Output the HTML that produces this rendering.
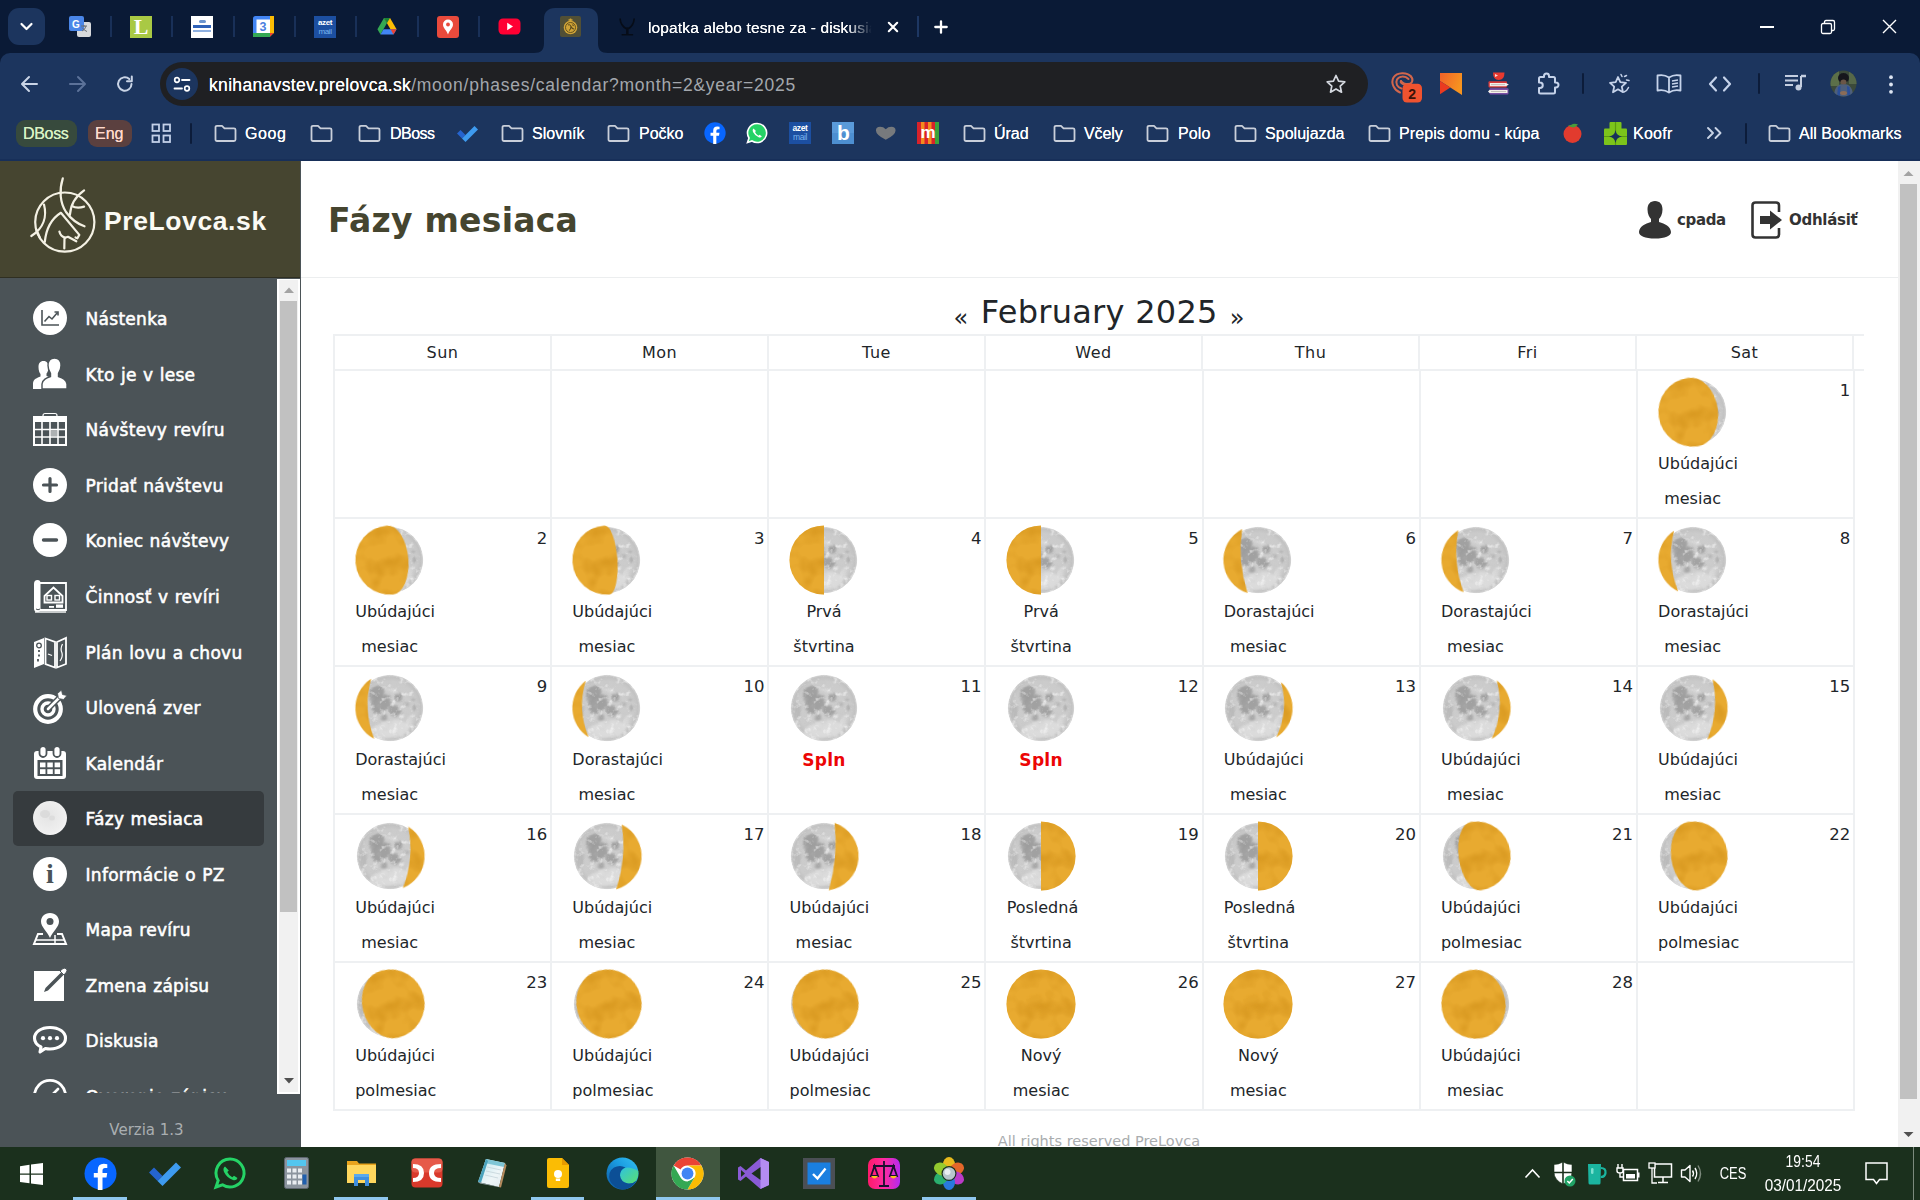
<!DOCTYPE html>
<html lang="sk">
<head>
<meta charset="utf-8">
<title>Fázy mesiaca</title>
<style>
*{box-sizing:border-box}
html,body{margin:0;padding:0}
body{width:1920px;height:1200px;overflow:hidden;position:relative;background:#fff;font-family:"DejaVu Sans","Liberation Sans",sans-serif;color:#212529}
.abs{position:absolute}
svg{display:block;overflow:visible}
/* ---------- browser chrome ---------- */
#tabstrip{position:absolute;left:0;top:0;width:1920px;height:70px;background:#0a1a36}
#toolbar{position:absolute;left:0;top:53px;width:1920px;height:108px;background:#1c355e;border-radius:10px 10px 0 0}
.ui{font-family:"Liberation Sans",sans-serif;color:#fff}
#urlpill{position:absolute;left:160px;top:62px;width:1208px;height:44px;border-radius:22px;background:#1f2023}
.bm{position:absolute;top:110px;height:46px;line-height:46px;font-family:"Liberation Sans",sans-serif;font-size:16px;color:#fff;white-space:nowrap}
.bmt{position:absolute;top:123px;height:22px;line-height:22px;font-family:"Liberation Sans",sans-serif;font-size:16px;color:#fff;white-space:nowrap;text-shadow:0 0 .4px #fff}
/* ---------- page ---------- */
#side{position:absolute;left:0;top:161px;width:301.500px;height:986px;background:#4b5357;border-right:1.500px solid #2f3538}
#sidehead{position:absolute;left:0;top:0;width:300px;height:117px;background:#464530;border-bottom:1px solid #2f2f22}
#main{position:absolute;left:301px;top:161px;width:1597px;height:986px;background:#fff}
.mi{position:absolute;left:13px;width:251px;height:55px;border-radius:5px}
.mi .ic{position:absolute;left:20px;top:10px;width:34px;height:34px}
.mi .tx{position:absolute;left:72.500px;top:1px;height:55px;line-height:55px;font-size:17px;color:#fff;white-space:nowrap;letter-spacing:.300px;word-spacing:.600px;-webkit-text-stroke:.550px #fff}
.mi.act{background:#363b3e}
/* calendar */
.th{position:absolute;top:336px;height:34px;line-height:33px;text-align:center;font-size:16px;letter-spacing:.500px;color:#212529}
.cell{position:absolute;width:217px;height:148px}
.cell .num{position:absolute;right:3.7px;top:12.5px;font-size:16.5px;line-height:16px;color:#212529}
.cell .moon{position:absolute;left:19.800px;top:5.700px;width:72px;height:72px}
.cell .lbl{position:absolute;left:21.200px;top:76px;width:69px;text-align:center;font-size:16px;line-height:35px;color:#212529;white-space:nowrap}
.cell .lbl span{display:block}
.cell .lbl span.w{text-align:left}
.cell .lbl b{color:#ec0505;font-weight:bold;font-size:17px;letter-spacing:.300px;position:relative;top:.500px}
/* taskbar */
#taskbar{position:absolute;left:0;top:1147px;width:1920px;height:53px;background:#1b301d}
.und{position:absolute;top:50px;height:3px;background:#8fc7ee}
.tray{position:absolute;font-family:"Liberation Sans",sans-serif;color:#fff;white-space:nowrap}
</style>
</head>
<body>
<!-- ================= BROWSER CHROME ================= -->
<div id="tabstrip"></div>
<div id="toolbar"></div>
<div class="abs" style="left:0;top:158.500px;width:1920px;height:2.500px;background:#172f59"></div>
<!-- tab search button -->
<div class="abs" style="left:8px;top:8px;width:37px;height:37px;border-radius:11px;background:#1c355e"></div>
<svg class="abs" style="left:18px;top:19px" width="17" height="15" viewBox="0 0 17 15"><path d="M3.5 5 L8.5 10 L13.5 5" fill="none" stroke="#fff" stroke-width="2.2" stroke-linecap="round" stroke-linejoin="round"/></svg>
<!-- pinned tab separators -->
<div class="abs" style="left:110px;top:16px;width:2px;height:21px;background:#193058"></div>
<div class="abs" style="left:171px;top:16px;width:2px;height:21px;background:#193058"></div>
<div class="abs" style="left:233px;top:16px;width:2px;height:21px;background:#193058"></div>
<div class="abs" style="left:294px;top:16px;width:2px;height:21px;background:#193058"></div>
<div class="abs" style="left:355px;top:16px;width:2px;height:21px;background:#193058"></div>
<div class="abs" style="left:417px;top:16px;width:2px;height:21px;background:#193058"></div>
<div class="abs" style="left:478px;top:16px;width:2px;height:21px;background:#193058"></div>
<!-- pinned favicons -->
<!-- google translate -->
<svg class="abs" style="left:68px;top:15px" width="24" height="23" viewBox="0 0 24 23"><rect x="9" y="7" width="14" height="15" rx="2" fill="#d7d9dc"/><rect x="1" y="1" width="15" height="15" rx="2" fill="#4a86e8"/><text x="4" y="12.5" font-family="Liberation Sans,sans-serif" font-size="10" font-weight="bold" fill="#fff">G</text><path d="M13 11 l6 0 M16 10 l0 2 M14 16 q3 -1 4 -5 M14 12.5 q2 3 5 4" stroke="#6b6f75" stroke-width="1" fill="none"/></svg>
<!-- L -->
<div class="abs" style="left:130px;top:16px;width:22px;height:22px;background:#a9c944;color:#fff;font-family:'Liberation Serif',serif;font-size:22px;line-height:22px;text-align:center;font-weight:bold">L</div>
<!-- white square w/ blue -->
<div class="abs" style="left:191px;top:16px;width:22px;height:22px;background:#fff"></div>
<div class="abs" style="left:193px;top:25px;width:18px;height:3px;background:#2f62b8"></div>
<div class="abs" style="left:193px;top:30px;width:18px;height:2px;background:#8fb0e0"></div>
<div class="abs" style="left:199px;top:20px;width:7px;height:3px;background:#6c95cf;border-radius:2px"></div>
<!-- google calendar -->
<svg class="abs" style="left:252px;top:15px" width="23" height="23" viewBox="0 0 23 23"><rect x="1" y="1" width="21" height="21" rx="2.500" fill="#4285f4"/><rect x="1" y="18" width="21" height="4" fill="#34a853"/><rect x="18" y="1" width="4" height="18" fill="#fbbc04"/><path d="M18 18 L22 18 L18 22 Z" fill="#ea4335"/><path d="M18 22 L22 18 L22 22 Z" fill="#0a1a36"/><rect x="4.500" y="4.500" width="13.500" height="13.500" fill="#fff"/><text x="7.500" y="16" font-family="Liberation Sans,sans-serif" font-size="12.500" font-weight="bold" fill="#4a7fe0">3</text></svg>
<!-- azet mail -->
<div class="abs" style="left:314px;top:16px;width:22px;height:22px;background:#1c4fa1"></div>
<div class="abs ui" style="left:314px;top:18px;width:22px;font-size:8px;line-height:8.500px;text-align:center;font-weight:bold;letter-spacing:-.4px;padding-top:1px">azet<br><span style="font-weight:normal;color:#79b4ee">mail</span></div>
<!-- google drive -->
<svg class="abs" style="left:376.500px;top:17px" width="20" height="18.300" viewBox="0 0 23 21"><path d="M8 1 L15 1 L22.5 14 L15.5 14 Z" fill="#fbbc04"/><path d="M8 1 L0.5 14 L4 20 L11.5 7 Z" fill="#34a853"/><path d="M4 20 L19 20 L22.5 14 L7.5 14 Z" fill="#4285f4"/><path d="M15.5 14 L22.5 14 L19 20 Z" fill="#ea4335"/><path d="M8 1 L11.5 7 L15 1 Z" fill="#188038"/></svg>
<!-- google maps -->
<svg class="abs" style="left:437px;top:16px" width="22" height="22" viewBox="0 0 22 22"><rect width="22" height="22" rx="3" fill="#e94a3c"/><path d="M11 3.5 a5 5 0 0 1 5 5 c0 3.5 -3.5 5.5 -5 10 c-1.500 -4.5 -5 -6.500 -5 -10 a5 5 0 0 1 5 -5z" fill="#fff"/><circle cx="11" cy="8.500" r="1.900" fill="#e94a3c"/></svg>
<!-- youtube -->
<svg class="abs" style="left:498px;top:18px" width="23" height="17" viewBox="0 0 23 17"><rect x="0.500" y="0.500" width="22" height="16" rx="4.500" fill="#ff0033"/><path d="M9.200 4.800 L15 8.500 L9.200 12.200 Z" fill="#fff"/></svg>
<!-- active tab -->
<svg class="abs" style="left:534px;top:8px" width="76" height="45" viewBox="0 0 76 45"><path d="M0 45 C7 45 10 42 10 35 L10 11 C10 4 14 0 21 0 L53 0 C60 0 64 4 64 11 L64 35 C64 42 67 45 74 45 Z" fill="#1c355e"/></svg>
<!-- prelovca favicon -->
<div class="abs" style="left:560px;top:16px;width:21px;height:21px;background:#514f35;border-radius:2px"></div>
<svg class="abs" style="left:560px;top:16px" width="21" height="21" viewBox="0 0 21 21"><circle cx="10.500" cy="11.500" r="6.800" fill="#d0a437"/><circle cx="10.500" cy="11.500" r="5" fill="none" stroke="#5a4a1c" stroke-width=".900"/><path d="M10.500 2.500 L10.500 5.500 M8.500 4 L12.500 4" stroke="#d0a437" stroke-width="1.400"/><path d="M8 9 Q10 8 11 10.500 Q12 13 14 13 M9 14.500 Q11 13.500 11 10.500 M12.500 8.500 L13.500 10" stroke="#5a4a1c" stroke-width="1.100" fill="none"/></svg>
<!-- second tab -->
<svg class="abs" style="left:617.500px;top:17px" width="18.700" height="19.500" viewBox="0 0 22 23"><path d="M2.500 2.500 Q3 10 10 14 M19 2.500 Q18.500 10 12 14 M10.500 13 L10.500 20.500 M11.500 13 L11.500 20.500 M5 21 L17 21" stroke="#060c17" stroke-width="1.900" fill="none" stroke-linecap="round"/></svg>
<div class="abs ui" id="tabtitle" style="left:648px;top:16.600px;width:226px;height:22px;line-height:22px;font-size:15.500px;letter-spacing:.140px;white-space:nowrap;overflow:hidden;text-shadow:0 0 .4px #fff;-webkit-mask-image:linear-gradient(90deg,#000 88%,transparent 99%);mask-image:linear-gradient(90deg,#000 88%,transparent 99%)">lopatka alebo tesne za - diskusia</div>
<svg class="abs" style="left:886px;top:20px" width="14" height="14" viewBox="0 0 14 14"><path d="M2.800 2.800 L11.200 11.200 M11.200 2.800 L2.800 11.200" stroke="#fff" stroke-width="2.100" stroke-linecap="round"/></svg>
<div class="abs" style="left:917px;top:16px;width:2px;height:21px;background:#1d3763"></div>
<svg class="abs" style="left:933px;top:19px" width="16" height="16" viewBox="0 0 16 16"><path d="M8 2.300 L8 13.700 M2.300 8 L13.700 8" stroke="#fff" stroke-width="2.300" stroke-linecap="round"/></svg>
<!-- window controls -->
<div class="abs" style="left:1760px;top:26px;width:14px;height:1.500px;background:#fff"></div>
<svg class="abs" style="left:1820px;top:19px" width="16" height="16" viewBox="0 0 16 16"><rect x="1.500" y="4.500" width="10" height="10" rx="1.500" fill="none" stroke="#fff" stroke-width="1.300"/><path d="M4.500 4.500 L4.500 3 Q4.500 1.500 6 1.500 L13 1.500 Q14.500 1.500 14.500 3 L14.500 10 Q14.500 11.500 13 11.500 L11.500 11.500" fill="none" stroke="#fff" stroke-width="1.300"/></svg>
<svg class="abs" style="left:1882px;top:19px" width="15" height="15" viewBox="0 0 15 15"><path d="M1 1 L14 14 M14 1 L1 14" stroke="#fff" stroke-width="1.400"/></svg>
<!-- nav buttons -->
<svg class="abs" style="left:20px;top:75px" width="19" height="18" viewBox="0 0 19 18"><path d="M17 9 L2.500 9 M9 2 L2 9 L9 16" fill="none" stroke="#c9d4e6" stroke-width="2" stroke-linecap="round" stroke-linejoin="round"/></svg>
<svg class="abs" style="left:68px;top:75px" width="19" height="18" viewBox="0 0 19 18"><path d="M2 9 L16.500 9 M10 2 L17 9 L10 16" fill="none" stroke="#5c7299" stroke-width="2" stroke-linecap="round" stroke-linejoin="round"/></svg>
<svg class="abs" style="left:115px;top:74px" width="20" height="20" viewBox="0 0 20 20"><path d="M16.500 10 A6.700 6.700 0 1 1 14.300 5" fill="none" stroke="#c9d4e6" stroke-width="2" stroke-linecap="round"/><path d="M16.800 2.500 L16.800 7.300 L12 7.300" fill="none" stroke="#c9d4e6" stroke-width="2" stroke-linejoin="round" stroke-linecap="round"/></svg>
<!-- url pill -->
<div id="urlpill"></div>
<div class="abs" style="left:166px;top:68px;width:32px;height:32px;border-radius:16px;background:#1c355e"></div>
<svg class="abs" style="left:173px;top:76px" width="18" height="17" viewBox="0 0 18 17"><circle cx="4" cy="4" r="2.300" fill="none" stroke="#fff" stroke-width="1.700"/><path d="M9 4 L16.500 4" stroke="#fff" stroke-width="1.800" stroke-linecap="round"/><circle cx="14" cy="12.500" r="2.300" fill="none" stroke="#fff" stroke-width="1.700"/><path d="M1.500 12.500 L9 12.500" stroke="#fff" stroke-width="1.800" stroke-linecap="round"/></svg>
<div class="abs ui" id="url" style="left:209px;top:70.800px;height:28px;line-height:28px;font-size:17.500px;white-space:nowrap"><span id="urlhost" style="color:#fff;text-shadow:0 0 .4px #fff;letter-spacing:.330px">knihanavstev.prelovca.sk</span><span id="urlpath" style="color:#a3a7ad;letter-spacing:.760px">/moon/phases/calendar?month=2&amp;year=2025</span></div>
<svg class="abs" style="left:1325px;top:73px" width="22" height="22" viewBox="0 0 22 22"><path d="M11 2.500 L13.600 8.200 L19.800 8.900 L15.200 13.100 L16.500 19.200 L11 16.100 L5.500 19.200 L6.800 13.100 L2.200 8.900 L8.400 8.200 Z" fill="none" stroke="#d5d9e0" stroke-width="1.700" stroke-linejoin="round"/></svg>
<!-- extension icons -->
<svg class="abs" style="left:1391px;top:71px" width="32" height="32" viewBox="0 0 32 32"><g fill="none" stroke="#d2664c" stroke-width="2" stroke-linecap="round"><path d="M20 5.500 C16 1 6 1 2.500 6.500 C-.500 12 3 19 9 21.500"/><path d="M17.500 8 C14 4.500 8 5 6 8.500 C4 12.500 6.500 16.500 10.500 17.500"/><path d="M20 5.500 C23 9 21 13 17 13 C13.500 13 11 11.500 10 10"/><path d="M14.500 13.500 C10.500 13.500 9 11 10 10"/></g><rect x="11.500" y="12.700" width="19.500" height="18.800" rx="4.500" fill="#f0532f"/><text x="21.200" y="27.500" text-anchor="middle" font-family="Liberation Sans,sans-serif" font-size="14" font-weight="bold" fill="#3a1208">2</text></svg>
<svg class="abs" style="left:1440px;top:72.500px" width="22" height="22" viewBox="0 0 22 22"><defs><linearGradient id="og" x1="0" y1="0" x2="1" y2=".4"><stop offset="0" stop-color="#f2612a"/><stop offset="1" stop-color="#f7941f"/></linearGradient></defs><path d="M0 0 L22 0 L22 22 L10.300 14.400 L0 8.100 Z" fill="url(#og)"/><path d="M0 8.100 L10.300 14.400 L0 21.300 Z" fill="#ea3a20"/></svg>
<svg class="abs" style="left:1487px;top:72px" width="24" height="24" viewBox="0 0 24 24"><path d="M6 .500 L17.500 .500 Q17.500 8 11.700 8 Q6 8 6 .500 Z" fill="#e8392f"/><path d="M8 2 L11 3.500 L8 5 Z" fill="#ffd9d2"/><rect x="1.500" y="9.300" width="18.500" height="6.200" rx="1" fill="#d93a3a"/><path d="M2.800 11 L19 11 L21.800 12.600 L19 14.200 L2.800 14.200 Z" fill="#f3efe9"/><path d="M4 12.600 L18 12.600" stroke="#b9b4ad" stroke-width=".800"/><rect x="2.500" y="16.300" width="19" height="6.200" rx="1" fill="#7b4fa6"/><path d="M2.500 18 L20.500 18 L20.500 21 L2.500 21 L1 19.500 Z" fill="#f3efe9"/><path d="M4 19.500 L19 19.500" stroke="#b9b4ad" stroke-width=".800"/></svg>
<svg class="abs" style="left:1535px;top:72px" width="24" height="24" viewBox="0 0 24 24"><path d="M9 5 L9 4 A2.500 2.500 0 0 1 14 4 L14 5 L18.500 5 Q20 5 20 6.500 L20 10.500 L21 10.500 A2.500 2.500 0 0 1 21 15.500 L20 15.500 L20 20 Q20 21.500 18.500 21.500 L5.500 21.500 Q4 21.500 4 20 L4 16 L5 16 A2.700 2.700 0 0 0 5 10.500 L4 10.500 L4 6.500 Q4 5 5.500 5 Z" fill="none" stroke="#c6d3ea" stroke-width="2" stroke-linejoin="round"/></svg>
<div class="abs" style="left:1582px;top:73px;width:2px;height:21px;background:#0c1c3a;border-radius:1px"></div>
<svg class="abs" style="left:1607px;top:72px" width="24" height="24" viewBox="0 0 24 24"><path d="M11 5 L13.300 10.200 L19 10.800 L14.800 14.600 L16 20.200 L11 17.300 L6 20.200 L7.200 14.600 L3 10.800 L8.700 10.200 Z" fill="none" stroke="#c6d3ea" stroke-width="1.800" stroke-linejoin="round"/><path d="M14 2.500 L15 4.500 M17.500 4.500 L19.500 3.500 M19.500 8 L22 8.500 M17 20 Q20 19 21.500 15.500" fill="none" stroke="#c6d3ea" stroke-width="1.500" stroke-linecap="round"/></svg>
<svg class="abs" style="left:1656px;top:73px" width="26" height="22" viewBox="0 0 26 22"><path d="M13 4.500 Q8 1 1.500 2.500 L1.500 17.500 Q8 16 13 19.500 Q18 16 24.500 17.500 L24.500 2.500 Q18 1 13 4.500 Z M13 4.500 L13 19.500" fill="none" stroke="#c6d3ea" stroke-width="1.800" stroke-linejoin="round"/><path d="M16 8 L22 7 M16 11 L22 10 M16 14 L22 13" stroke="#c6d3ea" stroke-width="1.400"/></svg>
<svg class="abs" style="left:1708px;top:75px" width="24" height="18" viewBox="0 0 24 18"><path d="M8 2.500 L2 9 L8 15.500 M16 2.500 L22 9 L16 15.500" fill="none" stroke="#c6d3ea" stroke-width="2.200" stroke-linejoin="round" stroke-linecap="round"/></svg>
<div class="abs" style="left:1758px;top:73px;width:2px;height:21px;background:#0c1c3a;border-radius:1px"></div>
<svg class="abs" style="left:1784px;top:73px" width="24" height="20" viewBox="0 0 24 20"><path d="M1 3 L14 3 M1 7.500 L14 7.500 M1 12 L9 12" stroke="#c4cee0" stroke-width="2"/><path d="M17 3 L17 14" stroke="#c4cee0" stroke-width="2"/><path d="M17 3 L22 3" stroke="#c4cee0" stroke-width="2.500"/><circle cx="14.500" cy="14.500" r="3" fill="#c4cee0"/></svg>
<!-- avatar -->
<svg class="abs" style="left:1830px;top:70px" width="27" height="27" viewBox="0 0 27 27"><defs><clipPath id="avc"><circle cx="13.500" cy="13.500" r="13"/></clipPath><filter id="avb"><feGaussianBlur stdDeviation=".700"/></filter></defs><g clip-path="url(#avc)"><rect width="27" height="27" fill="#3c4a3a"/><g filter="url(#avb)"><rect x="0" y="0" width="9" height="16" fill="#5c7048"/><rect x="19" y="0" width="8" height="14" fill="#566848"/><ellipse cx="13.500" cy="8" rx="5.500" ry="5" fill="#15181f"/><path d="M4 27 Q4 14 13.500 14 Q23 14 23 27 Z" fill="#4d5f7c"/><path d="M7 27 L8 17 L10.500 16 L10 27 Z M17 16 L19.500 17 L20.500 27 L17.500 27 Z" fill="#2b4f9a"/><ellipse cx="13.500" cy="12" rx="3" ry="2.500" fill="#6a5647"/><ellipse cx="13.500" cy="23" rx="3.500" ry="2" fill="#8a6c58"/></g></g></svg>
<svg class="abs" style="left:1888px;top:73px" width="6" height="24" viewBox="0 0 6 24"><circle cx="3" cy="4.200" r="1.900" fill="#dde5f2"/><circle cx="3" cy="11.500" r="1.900" fill="#dde5f2"/><circle cx="3" cy="18.800" r="1.900" fill="#dde5f2"/></svg>
<!-- ================= BOOKMARKS BAR ================= -->
<div class="abs" style="left:16px;top:120px;width:61px;height:27px;border-radius:9px;background:#374a3d"></div>
<div class="abs" style="left:88px;top:120px;width:44px;height:27px;border-radius:9px;background:#5b403f"></div>
<svg class="abs" style="left:151px;top:123px" width="21" height="21" viewBox="0 0 21 21"><g fill="none" stroke="#c3d0e8" stroke-width="1.800"><rect x="1.500" y="1.500" width="6.500" height="6.500"/><rect x="12.500" y="1.500" width="6.500" height="6.500"/><rect x="1.500" y="12.500" width="6.500" height="6.500"/><rect x="12.500" y="12.500" width="6.500" height="6.500"/></g></svg>
<div class="abs" style="left:190px;top:123px;width:2px;height:21px;background:#0c1c3a;border-radius:1px"></div>
<div class="bmt" id="bm0" style="left:23px;letter-spacing:-0.325px;color:#d9f2c4;text-shadow:0 0 .4px #d9f2c4">DBoss</div>
<div class="bmt" id="bm1" style="left:95px;letter-spacing:0.010px;color:#ffd9cc;text-shadow:0 0 .4px #ffd9cc">Eng</div>
<svg class="abs" style="left:214px;top:123px" width="23" height="20" viewBox="0 0 23 20"><path d="M1.500 4.300 Q1.500 2.800 3 2.800 L8 2.800 L10.500 5.300 L20 5.300 Q21.500 5.300 21.500 6.800 L21.500 16.500 Q21.500 18 20 18 L3 18 Q1.500 18 1.500 16.500 Z" fill="none" stroke="#c9cfda" stroke-width="1.800" stroke-linejoin="round"/></svg>
<div class="bmt" id="bm2" style="left:245px;letter-spacing:0.590px;">Goog</div>
<svg class="abs" style="left:310px;top:123px" width="23" height="20" viewBox="0 0 23 20"><path d="M1.500 4.300 Q1.500 2.800 3 2.800 L8 2.800 L10.500 5.300 L20 5.300 Q21.500 5.300 21.500 6.800 L21.500 16.500 Q21.500 18 20 18 L3 18 Q1.500 18 1.500 16.500 Z" fill="none" stroke="#c9cfda" stroke-width="1.800" stroke-linejoin="round"/></svg>
<svg class="abs" style="left:358px;top:123px" width="23" height="20" viewBox="0 0 23 20"><path d="M1.500 4.300 Q1.500 2.800 3 2.800 L8 2.800 L10.500 5.300 L20 5.300 Q21.500 5.300 21.500 6.800 L21.500 16.500 Q21.500 18 20 18 L3 18 Q1.500 18 1.500 16.500 Z" fill="none" stroke="#c9cfda" stroke-width="1.800" stroke-linejoin="round"/></svg>
<div class="bmt" id="bm4" style="left:390px;letter-spacing:-0.525px;">DBoss</div>
<svg class="abs" style="left:501px;top:123px" width="23" height="20" viewBox="0 0 23 20"><path d="M1.500 4.300 Q1.500 2.800 3 2.800 L8 2.800 L10.500 5.300 L20 5.300 Q21.500 5.300 21.500 6.800 L21.500 16.500 Q21.500 18 20 18 L3 18 Q1.500 18 1.500 16.500 Z" fill="none" stroke="#c9cfda" stroke-width="1.800" stroke-linejoin="round"/></svg>
<div class="bmt" id="bm5" style="left:532px;letter-spacing:0.004px;">Slovník</div>
<svg class="abs" style="left:607px;top:123px" width="23" height="20" viewBox="0 0 23 20"><path d="M1.500 4.300 Q1.500 2.800 3 2.800 L8 2.800 L10.500 5.300 L20 5.300 Q21.500 5.300 21.500 6.800 L21.500 16.500 Q21.500 18 20 18 L3 18 Q1.500 18 1.500 16.500 Z" fill="none" stroke="#c9cfda" stroke-width="1.800" stroke-linejoin="round"/></svg>
<div class="bmt" id="bm6" style="left:639px;letter-spacing:0.006px;">Počko</div>
<svg class="abs" style="left:963px;top:123px" width="23" height="20" viewBox="0 0 23 20"><path d="M1.500 4.300 Q1.500 2.800 3 2.800 L8 2.800 L10.500 5.300 L20 5.300 Q21.500 5.300 21.500 6.800 L21.500 16.500 Q21.500 18 20 18 L3 18 Q1.500 18 1.500 16.500 Z" fill="none" stroke="#c9cfda" stroke-width="1.800" stroke-linejoin="round"/></svg>
<div class="bmt" id="bm7" style="left:994px;letter-spacing:-0.047px;">Úrad</div>
<svg class="abs" style="left:1053px;top:123px" width="23" height="20" viewBox="0 0 23 20"><path d="M1.500 4.300 Q1.500 2.800 3 2.800 L8 2.800 L10.500 5.300 L20 5.300 Q21.500 5.300 21.500 6.800 L21.500 16.500 Q21.500 18 20 18 L3 18 Q1.500 18 1.500 16.500 Z" fill="none" stroke="#c9cfda" stroke-width="1.800" stroke-linejoin="round"/></svg>
<div class="bmt" id="bm8" style="left:1084px;letter-spacing:-0.125px;">Včely</div>
<svg class="abs" style="left:1146px;top:123px" width="23" height="20" viewBox="0 0 23 20"><path d="M1.500 4.300 Q1.500 2.800 3 2.800 L8 2.800 L10.500 5.300 L20 5.300 Q21.500 5.300 21.500 6.800 L21.500 16.500 Q21.500 18 20 18 L3 18 Q1.500 18 1.500 16.500 Z" fill="none" stroke="#c9cfda" stroke-width="1.800" stroke-linejoin="round"/></svg>
<div class="bmt" id="bm9" style="left:1178px;letter-spacing:0.117px;">Polo</div>
<svg class="abs" style="left:1234px;top:123px" width="23" height="20" viewBox="0 0 23 20"><path d="M1.500 4.300 Q1.500 2.800 3 2.800 L8 2.800 L10.500 5.300 L20 5.300 Q21.500 5.300 21.500 6.800 L21.500 16.500 Q21.500 18 20 18 L3 18 Q1.500 18 1.500 16.500 Z" fill="none" stroke="#c9cfda" stroke-width="1.800" stroke-linejoin="round"/></svg>
<div class="bmt" id="bm10" style="left:1265px;letter-spacing:0.033px;">Spolujazda</div>
<svg class="abs" style="left:1368px;top:123px" width="23" height="20" viewBox="0 0 23 20"><path d="M1.500 4.300 Q1.500 2.800 3 2.800 L8 2.800 L10.500 5.300 L20 5.300 Q21.500 5.300 21.500 6.800 L21.500 16.500 Q21.500 18 20 18 L3 18 Q1.500 18 1.500 16.500 Z" fill="none" stroke="#c9cfda" stroke-width="1.800" stroke-linejoin="round"/></svg>
<div class="bmt" id="bm11" style="left:1399px;letter-spacing:0.098px;">Prepis domu - kúpa</div>
<div class="bmt" id="bm12" style="left:1633px;letter-spacing:0.250px;">Koofr</div>
<svg class="abs" style="left:1768px;top:123px" width="23" height="20" viewBox="0 0 23 20"><path d="M1.500 4.300 Q1.500 2.800 3 2.800 L8 2.800 L10.500 5.300 L20 5.300 Q21.500 5.300 21.500 6.800 L21.500 16.500 Q21.500 18 20 18 L3 18 Q1.500 18 1.500 16.500 Z" fill="none" stroke="#c9cfda" stroke-width="1.800" stroke-linejoin="round"/></svg>
<div class="bmt" id="bm13" style="left:1799px;letter-spacing:0.019px;">All Bookmarks</div>
<!-- bookmark favicons -->
<svg class="abs" style="left:455px;top:123px" width="26" height="20" viewBox="0 0 26 20"><path d="M2 10.500 L5.500 7 L10.500 12 L7 15.500 Z" fill="#2564cf"/><path d="M7 15.500 L19.500 3 L23 6.500 L10.500 19 Z" fill="#3e9bf0"/></svg>
<svg class="abs" style="left:704px;top:122px" width="22" height="22" viewBox="0 0 33 33"><circle cx="16.500" cy="16.500" r="16" fill="#0866ff"/><path d="M18.500 33 L18.500 20.500 L22.500 20.500 L23.200 16 L18.500 16 L18.500 13.500 Q18.500 11 21 11 L23.300 11 L23.300 7.200 Q21.500 6.800 19.800 6.800 Q13.800 6.800 13.800 13 L13.800 16 L9.800 16 L9.800 20.500 L13.800 20.500 L13.800 33 Z" fill="#fff"/></svg>
<svg class="abs" style="left:746px;top:122px" width="22" height="22" viewBox="0 0 22 22"><path d="M11 1.500 A9.500 9.500 0 1 1 6 19 L1.500 20.500 L3 16 A9.500 9.500 0 0 1 11 1.500 Z" fill="#25d366" stroke="#fff" stroke-width="1.600"/><path d="M7.500 6.500 Q6 7.500 7 10 Q9 14 13 15.500 Q15 16 15.800 14.300 L13.500 12.800 L12.500 13.800 Q10 12.500 9 10 L10 9 Z" fill="#fff"/></svg>
<div class="abs" style="left:789px;top:122px;width:22px;height:22px;background:#1c4fa1"></div>
<div class="abs ui" style="left:789px;top:124px;width:22px;font-size:8.500px;line-height:9px;text-align:center;font-weight:bold;letter-spacing:-.4px">azet<br><span style="font-weight:normal;color:#79b4ee">mail</span></div>
<svg class="abs" style="left:832px;top:122px" width="22" height="22" viewBox="0 0 22 22"><rect width="22" height="22" fill="#4d8fd1"/><rect width="22" height="11" fill="#5a9ad9"/><text x="11.300" y="18.300" text-anchor="middle" font-family="Liberation Sans,sans-serif" font-weight="bold" font-size="21" fill="#fff">b</text></svg>
<svg class="abs" style="left:874.500px;top:126px" width="21.500" height="14.500" viewBox="0 0 23 18" preserveAspectRatio="none"><path d="M11.500 17 Q1 11 1 5.500 Q1 1 5.500 1 Q9 1 11.500 4 Q14 1 17.500 1 Q22 1 22 5.500 Q22 11 11.500 17 Z" fill="#777a7d"/></svg>
<svg class="abs" style="left:917px;top:122px" width="22" height="22" viewBox="0 0 22 22"><rect width="22" height="22" fill="#d8222a"/><rect x="4" width="3.500" height="22" fill="#f28c1e"/><rect x="11" width="3.500" height="22" fill="#f28c1e"/><rect x="18" width="4" height="22" fill="#3aa33a"/><text x="11" y="16" text-anchor="middle" font-family="Liberation Sans,sans-serif" font-weight="bold" font-size="17" fill="#fff">m</text></svg>
<svg class="abs" style="left:1562px;top:122px" width="22" height="22" viewBox="0 0 22 22"><circle cx="10.500" cy="12" r="9" fill="#e23b2e"/><path d="M9 3 Q12 1 16 2.500 Q14 5 11 5.500 Q8 5 6 3.500 Z" fill="#4a9b3a"/></svg>
<svg class="abs" style="left:1604px;top:122px" width="23" height="23" viewBox="0 0 23 23"><rect x="5.500" y="0" width="12" height="23" rx="1" fill="#7cc41b"/><rect x="0" y="6.500" width="23" height="16.500" rx="1" fill="#7cc41b"/><path d="M11.500 0 L11.500 23 M0 14.500 L23 14.500" stroke="#5a9a10" stroke-width="1.200"/><path d="M11.500 8 Q12.300 13.700 18 14.500 Q12.300 15.300 11.500 21 Q10.700 15.300 5 14.500 Q10.700 13.700 11.500 8 Z" fill="#17305a"/></svg>
<svg class="abs" style="left:1706px;top:126px" width="17" height="14" viewBox="0 0 17 14"><path d="M2 2 L7 7 L2 12 M9.500 2 L14.500 7 L9.500 12" fill="none" stroke="#c9d4e6" stroke-width="1.900" stroke-linecap="round" stroke-linejoin="round"/></svg>
<div class="abs" style="left:1745px;top:123px;width:2px;height:21px;background:#0c1c3a;border-radius:1px"></div>
<!-- ================= SIDEBAR ================= -->
<div id="side">
<div id="sidehead">
<svg class="abs" style="left:20px;top:9px" width="90" height="90" viewBox="0 0 90 90"><g fill="none" stroke="#f4f1e4" stroke-width="2.200" stroke-linecap="round" stroke-linejoin="round"><circle cx="44.800" cy="52.100" r="29.600"/><path d="M42.800 8.300 C39 20 40 33 46 42 C51 49 58 54 64.500 56.300"/><path d="M64.100 20.300 C56 26 50.500 35 49.900 45"/><path d="M51.800 36 Q57 39 64.100 36.600"/><path d="M24 34.500 C27 46 24 58 11.300 66"/><path d="M16.100 59 L20 68"/><path d="M24.800 72 C26 60 31 49 40.900 42.800 L59.300 64.900 L57.400 68.300 L55.500 67.500"/><path d="M56.300 71.300 L48 66.800 L44.500 68 L44.300 78.400"/><path d="M39.400 61.500 Q40.500 66.500 45 67.500"/></g></svg>
<div class="abs" id="logotext" style="left:104px;top:39.500px;height:40px;line-height:40px;font-family:'Liberation Sans',sans-serif;font-weight:bold;font-size:26.500px;color:#fbfaf4;letter-spacing:.600px;white-space:nowrap">PreLovca.sk</div>
</div>
<div class="abs" style="left:0;top:118px;width:277px;height:814px;overflow:hidden">
<div class="mi" style="top:12.3px"><svg class="ic" viewBox="0 0 34 34"><circle cx="17" cy="17" r="17" fill="#fff"/><path d="M9 9 L9 24 L26 24" fill="none" stroke="#4b5357" stroke-width="1.600"/><path d="M11.500 20.500 L16 15.500 L19 18 L24.500 11.500" fill="none" stroke="#4b5357" stroke-width="1.600"/><path d="M21.500 11 L25 11 L25 14.500" fill="none" stroke="#4b5357" stroke-width="1.600"/></svg><div class="tx">Nástenka</div></div>
<div class="mi" style="top:67.84px"><svg class="ic" viewBox="0 0 34 34"><path d="M10.500 4 C14 4 15.500 6.500 15.500 10 C15.500 13 14.500 15.500 13.500 16.500 L13.500 19 C17 20.500 20 21.500 20.500 25 L20.500 32 L0 32 L0 26 C0.500 22 4 21 7.500 19.500 L7.500 17 C6.500 16 5.500 13.500 5.500 10 C5.500 6.500 7 4 10.500 4 Z" fill="#fff"/><path d="M21.500 1 C26 1 28 4 28 8.500 C28 12 26.500 15 25.500 16.500 L25.500 19.500 C29.500 21 33.500 22.500 34 27 L34 32 L9 32 L9 27 C9.500 22.500 13.500 21 17.500 19.500 L17.500 16.500 C16.500 15 15 12 15 8.500 C15 4 17 1 21.500 1 Z" fill="#fff" stroke="#4b5357" stroke-width="1.400"/></svg><div class="tx">Kto je v lese</div></div>
<div class="mi" style="top:123.38px"><svg class="ic" viewBox="0 0 34 34"><rect x="1" y="5" width="32" height="28" fill="none" stroke="#fff" stroke-width="2"/><rect x="1" y="5" width="32" height="5" fill="#fff"/><path d="M1 17.500 L33 17.500 M1 25 L33 25 M9 10 L9 33 M17 10 L17 33 M25 10 L25 33" stroke="#fff" stroke-width="1.600"/><rect x="17.800" y="18.300" width="6.400" height="6" fill="#fff" opacity=".55"/><rect x="10" y="1.500" width="14" height="4" rx="2" fill="none" stroke="#fff" stroke-width="1.200"/></svg><div class="tx">Návštevy revíru</div></div>
<div class="mi" style="top:178.92px"><svg class="ic" viewBox="0 0 34 34"><circle cx="17" cy="17" r="17" fill="#fff"/><path d="M17 10.500 L17 23.500 M10.500 17 L23.500 17" stroke="#4b5357" stroke-width="3.200" stroke-linecap="round"/></svg><div class="tx">Pridať návštevu</div></div>
<div class="mi" style="top:234.46px"><svg class="ic" viewBox="0 0 34 34"><circle cx="17" cy="17" r="17" fill="#fff"/><path d="M10.500 17 L23.500 17" stroke="#4b5357" stroke-width="3.400" stroke-linecap="round"/></svg><div class="tx">Koniec návštevy</div></div>
<div class="mi" style="top:290.0px"><svg class="ic" viewBox="0 0 34 34"><path d="M7 4 L33 4 L33 31 L7 31" fill="none" stroke="#fff" stroke-width="1.800"/><path d="M7.500 4 L7.500 30 Q7.500 33 4.500 33 Q1 33 1 29.500 L1 5 Q1 1 4.500 1 Q7.500 1 7.500 4 Z" fill="#fff"/><path d="M3 30 Q5 31.500 7 30" fill="none" stroke="#4b5357" stroke-width="1"/><path d="M11.500 17 L20.500 8.500 L29.500 17 L29.500 23.500 L11.500 23.500 Z" fill="none" stroke="#fff" stroke-width="1.800"/><rect x="14" y="16.500" width="4.500" height="4.500" fill="none" stroke="#fff" stroke-width="1.400"/><rect x="22" y="16.500" width="4.500" height="4.500" fill="none" stroke="#fff" stroke-width="1.400"/><rect x="16" y="27" width="5" height="1.800" fill="#fff"/><rect x="23" y="25.500" width="7" height="3.300" fill="#fff"/><path d="M2 33 L33 33" stroke="#fff" stroke-width="1.400"/></svg><div class="tx">Činnosť v revíri</div></div>
<div class="mi" style="top:345.54px"><svg class="ic" viewBox="0 0 34 34"><path d="M1 7 L11 3 L11 29 L1 33 Z" fill="#fff"/><circle cx="6" cy="10.500" r="2.300" fill="none" stroke="#4b5357" stroke-width="1.300"/><path d="M6 15 L6 17 M6 19.500 L6 21.500 M5 24 L5 26.500" stroke="#4b5357" stroke-width="1.800"/><path d="M12.500 3.500 L22 7 L22 32.500 L12.500 29 Z" fill="none" stroke="#fff" stroke-width="1.800"/><path d="M15 19 L19 20.500" stroke="#fff" stroke-width="1.300"/><path d="M24 7 L33 3 L33 29 L24 32.500 Z" fill="none" stroke="#fff" stroke-width="1.800"/><path d="M29.500 9 Q27 14 29 18 Q30 22 27 26" fill="none" stroke="#fff" stroke-width="1.200"/></svg><div class="tx">Plán lovu a chovu</div></div>
<div class="mi" style="top:401.08px"><svg class="ic" viewBox="0 0 34 34"><circle cx="15" cy="19" r="12.800" fill="none" stroke="#fff" stroke-width="4.200"/><circle cx="15" cy="19" r="6" fill="none" stroke="#fff" stroke-width="3.400"/><circle cx="15" cy="19" r="1.800" fill="#fff"/><path d="M15 19 L28 6" stroke="#4b5357" stroke-width="5.500" stroke-linecap="round"/><path d="M15 19 L28 6" stroke="#fff" stroke-width="2.600" stroke-linecap="round"/><path d="M25.500 8.500 L24.500 3.500 L28.500 0 L29.500 4.500 L34 5.500 L30.500 9.500 Z" fill="#fff" stroke="#4b5357" stroke-width=".800"/></svg><div class="tx">Ulovená zver</div></div>
<div class="mi" style="top:456.62px"><svg class="ic" viewBox="0 0 34 34"><path d="M4 5 L30 5 Q33 5 33 8 L33 30 Q33 33 30 33 L4 33 Q1 33 1 30 L1 8 Q1 5 4 5 Z" fill="#fff"/><rect x="4.500" y="14" width="25" height="16" fill="#4b5357"/><g fill="#fff"><rect x="7" y="16.500" width="5.500" height="4.800"/><rect x="14.300" y="16.500" width="5.500" height="4.800"/><rect x="21.600" y="16.500" width="5.500" height="4.800"/><rect x="7" y="23.200" width="5.500" height="4.800"/><rect x="14.300" y="23.200" width="5.500" height="4.800"/><rect x="21.600" y="23.200" width="5.500" height="4.800"/></g><rect x="6.500" y="0" width="7" height="11" rx="3.500" fill="#fff" stroke="#4b5357" stroke-width="1.800"/><rect x="20.500" y="0" width="7" height="11" rx="3.500" fill="#fff" stroke="#4b5357" stroke-width="1.800"/></svg><div class="tx">Kalendár</div></div>
<div class="mi act" style="top:512.16px"><svg class="ic" viewBox="0 0 34 34"><defs><radialGradient id="smg" cx=".45" cy=".45" r=".6"><stop offset="0" stop-color="#e4e4e4"/><stop offset=".8" stop-color="#efefef"/><stop offset="1" stop-color="#f8f8f8"/></radialGradient></defs><circle cx="17" cy="17" r="17" fill="url(#smg)"/><ellipse cx="12" cy="13" rx="5" ry="4" fill="#d5d5d5" opacity=".7"/><ellipse cx="19" cy="17" rx="3" ry="2.500" fill="#d8d8d8" opacity=".7"/></svg><div class="tx">Fázy mesiaca</div></div>
<div class="mi" style="top:567.7px"><svg class="ic" viewBox="0 0 34 34"><circle cx="17" cy="17" r="17" fill="#fff"/><text x="17" y="26" text-anchor="middle" font-family="Liberation Serif,serif" font-weight="bold" font-size="28" fill="#4b5357">i</text></svg><div class="tx">Informácie o PZ</div></div>
<div class="mi" style="top:623.24px"><svg class="ic" viewBox="0 0 34 34"><path d="M17 1 C22.500 1 26 5 26 9.500 C26 15 20 19 17 26 C14 19 8 15 8 9.500 C8 5 11.500 1 17 1 Z" fill="#fff"/><circle cx="17" cy="9.500" r="3.500" fill="#4b5357"/><path d="M10 22 L5 22 L1 32 L33 32 L29 22 L24 22" fill="none" stroke="#fff" stroke-width="2"/><path d="M3 28 L31 28 M22 23 L22 32" stroke="#fff" stroke-width="1.500"/></svg><div class="tx">Mapa revíru</div></div>
<div class="mi" style="top:678.78px"><svg class="ic" viewBox="0 0 34 34"><rect x="1" y="3" width="30" height="30" fill="#fff"/><path d="M11 24 L12.500 20 L28 4.500 L30.500 7 L15 22.500 Z" fill="#4b5357"/><path d="M27 3 L30 0.500 Q32 -0.500 33.500 1 Q34.500 2.500 33.500 4 L31 7 Z" fill="#fff" stroke="#4b5357" stroke-width="1"/></svg><div class="tx">Zmena zápisu</div></div>
<div class="mi" style="top:734.32px"><svg class="ic" viewBox="0 0 34 34"><path d="M17 4.500 C26 4.500 32.500 9.200 32.500 15.200 C32.500 21.200 26 26 17 26 C15.300 26 13.800 25.800 12.300 25.500 L7 29 L8 24 C4 22 1.500 19 1.500 15.200 C1.500 9.200 8 4.500 17 4.500 Z" fill="none" stroke="#fff" stroke-width="3.100" stroke-linejoin="round"/><circle cx="10" cy="15.200" r="2.100" fill="#fff"/><circle cx="17" cy="15.200" r="2.100" fill="#fff"/><circle cx="24" cy="15.200" r="2.100" fill="#fff"/></svg><div class="tx">Diskusia</div></div>
<div class="mi" style="top:789.86px"><svg class="ic" viewBox="0 0 34 34"><circle cx="17" cy="17" r="15.600" fill="none" stroke="#fff" stroke-width="2.800"/><path d="M17 18 L25 10" stroke="#fff" stroke-width="2.600" stroke-linecap="round"/><circle cx="9" cy="16" r="1" fill="#fff"/></svg><div class="tx">Overenie zápisu</div></div>
</div>
<div class="abs" style="left:277px;top:117.500px;width:23px;height:815px;background:#fff"></div>
<div class="abs" style="left:279.200px;top:119px;width:18.800px;height:811.500px;background:#f1f1f1"></div>
<div class="abs" style="left:280px;top:140.300px;width:17.300px;height:610.500px;background:#c1c1c1"></div>
<svg class="abs" style="left:283.500px;top:126px" width="10" height="6" viewBox="0 0 10 6"><path d="M0 6 L5 .500 L10 6 Z" fill="#a3a3a3"/></svg>
<svg class="abs" style="left:283.500px;top:917px" width="10" height="6" viewBox="0 0 10 6"><path d="M0 0 L5 5.500 L10 0 Z" fill="#505050"/></svg>
<div class="abs" style="left:0;top:959px;width:293px;text-align:center;font-size:15px;line-height:20px;color:#a9aeb1">Verzia 1.3</div>
</div>
<!-- ================= MAIN ================= -->
<div id="main"></div>
<svg class="abs" width="0" height="0" style="left:0;top:0"><defs>
<radialGradient id="mg" cx=".5" cy=".5" r=".5"><stop offset="0" stop-color="#cecece"/><stop offset=".8" stop-color="#cbcbcb"/><stop offset=".93" stop-color="#c2c2c2"/><stop offset="1" stop-color="#d6d6d6"/></radialGradient>
<radialGradient id="gg" cx=".5" cy=".5" r=".5"><stop offset="0" stop-color="#e6a62c"/><stop offset=".9" stop-color="#e9aa30"/><stop offset="1" stop-color="#ecb445"/></radialGradient>
<filter id="mb" x="-20%" y="-20%" width="140%" height="140%"><feGaussianBlur stdDeviation="1.300" result="bl"/><feTurbulence type="fractalNoise" baseFrequency=".07" numOctaves="2" seed="3" result="t"/><feDisplacementMap in="bl" in2="t" scale="5" xChannelSelector="R" yChannelSelector="G"/></filter>
<filter id="mn" x="0" y="0" width="100%" height="100%"><feTurbulence type="fractalNoise" baseFrequency=".16" numOctaves="3" seed="11" result="n"/><feColorMatrix in="n" type="matrix" values="0 0 0 0 1  0 0 0 0 1  0 0 0 0 1  3 0 0 0 -1.62"/><feComposite in2="SourceGraphic" operator="in"/></filter>
<filter id="md" x="0" y="0" width="100%" height="100%"><feTurbulence type="fractalNoise" baseFrequency=".13" numOctaves="3" seed="23" result="n"/><feColorMatrix in="n" type="matrix" values="0 0 0 0 .55  0 0 0 0 .55  0 0 0 0 .55  -3 0 0 0 1.25"/><feComposite in2="SourceGraphic" operator="in"/></filter>
<filter id="gt" x="0" y="0" width="100%" height="100%" color-interpolation-filters="sRGB"><feTurbulence type="fractalNoise" baseFrequency=".06" numOctaves="2" seed="5" result="n"/><feColorMatrix in="n" type="matrix" values="0 0 0 0 .84  0 0 0 0 .59  0 0 0 0 .12  2.2 0 0 0 -.95" result="c"/><feComposite in="c" in2="SourceGraphic" operator="in" result="d"/><feMerge><feMergeNode in="SourceGraphic"/><feMergeNode in="d"/></feMerge></filter>
<clipPath id="mc"><circle cx="36" cy="36" r="33.300"/></clipPath>
</defs></svg>
<div class="abs" id="h1" style="left:328px;top:198px;height:46px;line-height:46px;font-size:33px;font-weight:bold;color:#45452f;white-space:nowrap;letter-spacing:.270px">Fázy mesiaca</div>
<div class="abs" style="left:301px;top:277px;width:1597px;height:1px;background:#eceeef"></div>
<svg class="abs" style="left:1638px;top:200px" width="34" height="39" viewBox="0 0 34 39"><path d="M17 1 C22 1 24.500 4.500 24.500 9.500 C24.500 14 22.500 17.500 21 19 L21 22 C27 24 32.500 26 33 32 C33 36 27 38.500 17 38.500 C7 38.500 1 36 1 32 C1.500 26 7 24 13 22 L13 19 C11.500 17.500 9.500 14 9.500 9.500 C9.500 4.500 12 1 17 1 Z" fill="#333"/></svg>
<div class="abs" id="uname" style="left:1677px;top:207.500px;height:24px;line-height:24px;font-size:15px;font-weight:bold;color:#333;white-space:nowrap;letter-spacing:-.350px">cpada</div>
<svg class="abs" style="left:1751px;top:201px" width="32" height="38" viewBox="0 0 32 38"><path d="M28 11 L28 4.500 Q28 1.500 25 1.500 L4.500 1.500 Q1.500 1.500 1.500 4.500 L1.500 33.500 Q1.500 36.500 4.500 36.500 L25 36.500 Q28 36.500 28 33.500 L28 27" fill="none" stroke="#333" stroke-width="2.600"/><path d="M9 15 L19 15 L19 9.500 L31 19 L19 28.500 L19 23 L9 23 Z" fill="#333"/></svg>
<div class="abs" id="logout" style="left:1789px;top:207.500px;height:24px;line-height:24px;font-size:15px;font-weight:bold;color:#333;white-space:nowrap;letter-spacing:-.280px">Odhlásiť</div>
<div class="abs" id="mtitle" style="left:334px;top:287px;width:1530px;height:50px;line-height:50px;text-align:center;color:#212529;white-space:nowrap"><span style="font-size:24px;position:relative;top:2.5px">«</span><span style="font-size:32px;margin:0 12px 0 12.5px;letter-spacing:.270px">February 2025</span><span style="font-size:24px;position:relative;top:2.5px">»</span></div>
<div class="th" style="left:334px;width:217px">Sun</div>
<div class="th" style="left:551px;width:217px">Mon</div>
<div class="th" style="left:768px;width:217px">Tue</div>
<div class="th" style="left:985px;width:217px">Wed</div>
<div class="th" style="left:1202px;width:217px">Thu</div>
<div class="th" style="left:1419px;width:217px">Fri</div>
<div class="th" style="left:1636px;width:217px">Sat</div>
<div class="abs" style="left:333px;top:334.30px;width:1531px;height:2px;background:#eef0f2"></div>
<div class="abs" style="left:333px;top:369.10px;width:1531px;height:2px;background:#eef0f2"></div>
<div class="abs" style="left:333.00px;top:336px;width:2px;height:34px;background:#eef0f2"></div>
<div class="abs" style="left:333.00px;top:370px;width:2px;height:741px;background:#eef0f2"></div>
<div class="abs" style="left:549.70px;top:336px;width:2px;height:34px;background:#eef0f2"></div>
<div class="abs" style="left:550.15px;top:370px;width:2px;height:741px;background:#eef0f2"></div>
<div class="abs" style="left:766.70px;top:336px;width:2px;height:34px;background:#eef0f2"></div>
<div class="abs" style="left:767.30px;top:370px;width:2px;height:741px;background:#eef0f2"></div>
<div class="abs" style="left:983.70px;top:336px;width:2px;height:34px;background:#eef0f2"></div>
<div class="abs" style="left:984.45px;top:370px;width:2px;height:741px;background:#eef0f2"></div>
<div class="abs" style="left:1200.70px;top:336px;width:2px;height:34px;background:#eef0f2"></div>
<div class="abs" style="left:1201.60px;top:370px;width:2px;height:741px;background:#eef0f2"></div>
<div class="abs" style="left:1417.70px;top:336px;width:2px;height:34px;background:#eef0f2"></div>
<div class="abs" style="left:1418.75px;top:370px;width:2px;height:741px;background:#eef0f2"></div>
<div class="abs" style="left:1634.70px;top:336px;width:2px;height:34px;background:#eef0f2"></div>
<div class="abs" style="left:1635.90px;top:370px;width:2px;height:741px;background:#eef0f2"></div>
<div class="abs" style="left:1851.70px;top:336px;width:2px;height:34px;background:#eef0f2"></div>
<div class="abs" style="left:1853.05px;top:370px;width:2px;height:741px;background:#eef0f2"></div>
<div class="abs" style="left:333px;top:517.10px;width:1522.05px;height:2px;background:#eef0f2"></div>
<div class="abs" style="left:333px;top:665.10px;width:1522.05px;height:2px;background:#eef0f2"></div>
<div class="abs" style="left:333px;top:813.10px;width:1522.05px;height:2px;background:#eef0f2"></div>
<div class="abs" style="left:333px;top:961.10px;width:1522.05px;height:2px;background:#eef0f2"></div>
<div class="abs" style="left:333px;top:1109.10px;width:1522.05px;height:2px;background:#eef0f2"></div>
<div class="cell" style="left:334.0px;top:370px"></div>
<div class="cell" style="left:551.15px;top:370px"></div>
<div class="cell" style="left:768.3px;top:370px"></div>
<div class="cell" style="left:985.45px;top:370px"></div>
<div class="cell" style="left:1202.6px;top:370px"></div>
<div class="cell" style="left:1419.75px;top:370px"></div>
<div class="cell" style="left:1636.9px;top:370px"><div class="num">1</div><svg class="moon" viewBox="0 0 72 72"><g clip-path="url(#mc)"><circle cx="36" cy="36" r="33.3" fill="url(#mg)"/><g filter="url(#mb)"><ellipse cx="23.3" cy="20.7" rx="7.3" ry="6.0" opacity="0.9" fill="#9c9c9c" transform="rotate(-20 23.3 20.7)"/><ellipse cx="27.3" cy="32.0" rx="11.0" ry="8.3" opacity="0.9" fill="#9c9c9c" transform="rotate(-25 27.3 32.0)"/><ellipse cx="19.4" cy="26.7" rx="4.0" ry="4.0" opacity="0.7" fill="#9c9c9c"/><ellipse cx="41.3" cy="39.0" rx="6.3" ry="5.7" opacity="0.85" fill="#9c9c9c" transform="rotate(20 41.3 39.0)"/><ellipse cx="44.8" cy="25.5" rx="4.4" ry="4.0" opacity="0.95" fill="#9c9c9c"/><ellipse cx="30.0" cy="46.0" rx="3.3" ry="3.0" opacity="0.75" fill="#9c9c9c"/><ellipse cx="60.6" cy="36.7" rx="2.0" ry="3.3" opacity="0.6" fill="#9c9c9c"/><ellipse cx="59.3" cy="27.3" rx="2.0" ry="2.0" opacity="0.5" fill="#9c9c9c"/><ellipse cx="9.4" cy="39.3" rx="2.7" ry="9.3" opacity="0.35" fill="#9c9c9c"/><ellipse cx="36.0" cy="50.7" rx="3.3" ry="2.7" opacity="0.35" fill="#9c9c9c"/><ellipse cx="52.0" cy="33.3" rx="2.3" ry="2.0" opacity="0.5" fill="#9c9c9c"/><ellipse cx="36.0" cy="57.3" rx="20.0" ry="8.7" opacity="0.6" fill="#e6e6e6" transform="rotate(-10 36.0 57.3)"/><ellipse cx="56.0" cy="49.3" rx="3.3" ry="6.7" opacity="0.5" fill="#e6e6e6" transform="rotate(20 56.0 49.3)"/><ellipse cx="46.7" cy="43.3" rx="2.0" ry="2.0" opacity="0.9" fill="#f2f2f2"/><ellipse cx="39.3" cy="20.0" rx="8.0" ry="2.3" opacity="0.55" fill="#dedede" transform="rotate(25 39.3 20.0)"/><ellipse cx="37.3" cy="29.3" rx="2.0" ry="4.0" opacity="0.6" fill="#dcdcdc" transform="rotate(-30 37.3 29.3)"/></g><circle cx="36" cy="36" r="33.3" fill="#fff" filter="url(#md)" opacity=".22"/><circle cx="36" cy="36" r="33.3" fill="#fff" filter="url(#mn)" opacity=".6"/></g><path d="M36.00 1.40 A34.6 34.6 0 0 0 36.00 70.60 A24.91 34.60 0 0 0 36.00 1.40 Z" fill="#e8aa30" filter="url(#gt)" transform="rotate(-8 36 36)"/></svg><div class="lbl"><span class="w">Ubúdajúci</span><span>mesiac</span></div></div>
<div class="cell" style="left:334.0px;top:518px"><div class="num">2</div><svg class="moon" viewBox="0 0 72 72"><g clip-path="url(#mc)"><circle cx="36" cy="36" r="33.3" fill="url(#mg)"/><g filter="url(#mb)"><ellipse cx="23.3" cy="20.7" rx="7.3" ry="6.0" opacity="0.9" fill="#9c9c9c" transform="rotate(-20 23.3 20.7)"/><ellipse cx="27.3" cy="32.0" rx="11.0" ry="8.3" opacity="0.9" fill="#9c9c9c" transform="rotate(-25 27.3 32.0)"/><ellipse cx="19.4" cy="26.7" rx="4.0" ry="4.0" opacity="0.7" fill="#9c9c9c"/><ellipse cx="41.3" cy="39.0" rx="6.3" ry="5.7" opacity="0.85" fill="#9c9c9c" transform="rotate(20 41.3 39.0)"/><ellipse cx="44.8" cy="25.5" rx="4.4" ry="4.0" opacity="0.95" fill="#9c9c9c"/><ellipse cx="30.0" cy="46.0" rx="3.3" ry="3.0" opacity="0.75" fill="#9c9c9c"/><ellipse cx="60.6" cy="36.7" rx="2.0" ry="3.3" opacity="0.6" fill="#9c9c9c"/><ellipse cx="59.3" cy="27.3" rx="2.0" ry="2.0" opacity="0.5" fill="#9c9c9c"/><ellipse cx="9.4" cy="39.3" rx="2.7" ry="9.3" opacity="0.35" fill="#9c9c9c"/><ellipse cx="36.0" cy="50.7" rx="3.3" ry="2.7" opacity="0.35" fill="#9c9c9c"/><ellipse cx="52.0" cy="33.3" rx="2.3" ry="2.0" opacity="0.5" fill="#9c9c9c"/><ellipse cx="36.0" cy="57.3" rx="20.0" ry="8.7" opacity="0.6" fill="#e6e6e6" transform="rotate(-10 36.0 57.3)"/><ellipse cx="56.0" cy="49.3" rx="3.3" ry="6.7" opacity="0.5" fill="#e6e6e6" transform="rotate(20 56.0 49.3)"/><ellipse cx="46.7" cy="43.3" rx="2.0" ry="2.0" opacity="0.9" fill="#f2f2f2"/><ellipse cx="39.3" cy="20.0" rx="8.0" ry="2.3" opacity="0.55" fill="#dedede" transform="rotate(25 39.3 20.0)"/><ellipse cx="37.3" cy="29.3" rx="2.0" ry="4.0" opacity="0.6" fill="#dcdcdc" transform="rotate(-30 37.3 29.3)"/></g><circle cx="36" cy="36" r="33.3" fill="#fff" filter="url(#md)" opacity=".22"/><circle cx="36" cy="36" r="33.3" fill="#fff" filter="url(#mn)" opacity=".6"/></g><path d="M36.00 1.40 A34.6 34.6 0 0 0 36.00 70.60 A18.34 34.60 0 0 0 36.00 1.40 Z" fill="#e8aa30" filter="url(#gt)" transform="rotate(-5 36 36)"/></svg><div class="lbl"><span class="w">Ubúdajúci</span><span>mesiac</span></div></div>
<div class="cell" style="left:551.15px;top:518px"><div class="num">3</div><svg class="moon" viewBox="0 0 72 72"><g clip-path="url(#mc)"><circle cx="36" cy="36" r="33.3" fill="url(#mg)"/><g filter="url(#mb)"><ellipse cx="23.3" cy="20.7" rx="7.3" ry="6.0" opacity="0.9" fill="#9c9c9c" transform="rotate(-20 23.3 20.7)"/><ellipse cx="27.3" cy="32.0" rx="11.0" ry="8.3" opacity="0.9" fill="#9c9c9c" transform="rotate(-25 27.3 32.0)"/><ellipse cx="19.4" cy="26.7" rx="4.0" ry="4.0" opacity="0.7" fill="#9c9c9c"/><ellipse cx="41.3" cy="39.0" rx="6.3" ry="5.7" opacity="0.85" fill="#9c9c9c" transform="rotate(20 41.3 39.0)"/><ellipse cx="44.8" cy="25.5" rx="4.4" ry="4.0" opacity="0.95" fill="#9c9c9c"/><ellipse cx="30.0" cy="46.0" rx="3.3" ry="3.0" opacity="0.75" fill="#9c9c9c"/><ellipse cx="60.6" cy="36.7" rx="2.0" ry="3.3" opacity="0.6" fill="#9c9c9c"/><ellipse cx="59.3" cy="27.3" rx="2.0" ry="2.0" opacity="0.5" fill="#9c9c9c"/><ellipse cx="9.4" cy="39.3" rx="2.7" ry="9.3" opacity="0.35" fill="#9c9c9c"/><ellipse cx="36.0" cy="50.7" rx="3.3" ry="2.7" opacity="0.35" fill="#9c9c9c"/><ellipse cx="52.0" cy="33.3" rx="2.3" ry="2.0" opacity="0.5" fill="#9c9c9c"/><ellipse cx="36.0" cy="57.3" rx="20.0" ry="8.7" opacity="0.6" fill="#e6e6e6" transform="rotate(-10 36.0 57.3)"/><ellipse cx="56.0" cy="49.3" rx="3.3" ry="6.7" opacity="0.5" fill="#e6e6e6" transform="rotate(20 56.0 49.3)"/><ellipse cx="46.7" cy="43.3" rx="2.0" ry="2.0" opacity="0.9" fill="#f2f2f2"/><ellipse cx="39.3" cy="20.0" rx="8.0" ry="2.3" opacity="0.55" fill="#dedede" transform="rotate(25 39.3 20.0)"/><ellipse cx="37.3" cy="29.3" rx="2.0" ry="4.0" opacity="0.6" fill="#dcdcdc" transform="rotate(-30 37.3 29.3)"/></g><circle cx="36" cy="36" r="33.3" fill="#fff" filter="url(#md)" opacity=".22"/><circle cx="36" cy="36" r="33.3" fill="#fff" filter="url(#mn)" opacity=".6"/></g><path d="M36.00 1.40 A34.6 34.6 0 0 0 36.00 70.60 A10.38 34.60 0 0 0 36.00 1.40 Z" fill="#e8aa30" filter="url(#gt)" transform="rotate(-4 36 36)"/></svg><div class="lbl"><span class="w">Ubúdajúci</span><span>mesiac</span></div></div>
<div class="cell" style="left:768.3px;top:518px"><div class="num">4</div><svg class="moon" viewBox="0 0 72 72"><g clip-path="url(#mc)"><circle cx="36" cy="36" r="33.3" fill="url(#mg)"/><g filter="url(#mb)"><ellipse cx="23.3" cy="20.7" rx="7.3" ry="6.0" opacity="0.9" fill="#9c9c9c" transform="rotate(-20 23.3 20.7)"/><ellipse cx="27.3" cy="32.0" rx="11.0" ry="8.3" opacity="0.9" fill="#9c9c9c" transform="rotate(-25 27.3 32.0)"/><ellipse cx="19.4" cy="26.7" rx="4.0" ry="4.0" opacity="0.7" fill="#9c9c9c"/><ellipse cx="41.3" cy="39.0" rx="6.3" ry="5.7" opacity="0.85" fill="#9c9c9c" transform="rotate(20 41.3 39.0)"/><ellipse cx="44.8" cy="25.5" rx="4.4" ry="4.0" opacity="0.95" fill="#9c9c9c"/><ellipse cx="30.0" cy="46.0" rx="3.3" ry="3.0" opacity="0.75" fill="#9c9c9c"/><ellipse cx="60.6" cy="36.7" rx="2.0" ry="3.3" opacity="0.6" fill="#9c9c9c"/><ellipse cx="59.3" cy="27.3" rx="2.0" ry="2.0" opacity="0.5" fill="#9c9c9c"/><ellipse cx="9.4" cy="39.3" rx="2.7" ry="9.3" opacity="0.35" fill="#9c9c9c"/><ellipse cx="36.0" cy="50.7" rx="3.3" ry="2.7" opacity="0.35" fill="#9c9c9c"/><ellipse cx="52.0" cy="33.3" rx="2.3" ry="2.0" opacity="0.5" fill="#9c9c9c"/><ellipse cx="36.0" cy="57.3" rx="20.0" ry="8.7" opacity="0.6" fill="#e6e6e6" transform="rotate(-10 36.0 57.3)"/><ellipse cx="56.0" cy="49.3" rx="3.3" ry="6.7" opacity="0.5" fill="#e6e6e6" transform="rotate(20 56.0 49.3)"/><ellipse cx="46.7" cy="43.3" rx="2.0" ry="2.0" opacity="0.9" fill="#f2f2f2"/><ellipse cx="39.3" cy="20.0" rx="8.0" ry="2.3" opacity="0.55" fill="#dedede" transform="rotate(25 39.3 20.0)"/><ellipse cx="37.3" cy="29.3" rx="2.0" ry="4.0" opacity="0.6" fill="#dcdcdc" transform="rotate(-30 37.3 29.3)"/></g><circle cx="36" cy="36" r="33.3" fill="#fff" filter="url(#md)" opacity=".22"/><circle cx="36" cy="36" r="33.3" fill="#fff" filter="url(#mn)" opacity=".6"/></g><path d="M36.00 1.40 A34.6 34.6 0 0 0 36.00 70.60 L36.00 1.40 Z" fill="#e8aa30" filter="url(#gt)"/></svg><div class="lbl"><span>Prvá</span><span>štvrtina</span></div></div>
<div class="cell" style="left:985.45px;top:518px"><div class="num">5</div><svg class="moon" viewBox="0 0 72 72"><g clip-path="url(#mc)"><circle cx="36" cy="36" r="33.3" fill="url(#mg)"/><g filter="url(#mb)"><ellipse cx="23.3" cy="20.7" rx="7.3" ry="6.0" opacity="0.9" fill="#9c9c9c" transform="rotate(-20 23.3 20.7)"/><ellipse cx="27.3" cy="32.0" rx="11.0" ry="8.3" opacity="0.9" fill="#9c9c9c" transform="rotate(-25 27.3 32.0)"/><ellipse cx="19.4" cy="26.7" rx="4.0" ry="4.0" opacity="0.7" fill="#9c9c9c"/><ellipse cx="41.3" cy="39.0" rx="6.3" ry="5.7" opacity="0.85" fill="#9c9c9c" transform="rotate(20 41.3 39.0)"/><ellipse cx="44.8" cy="25.5" rx="4.4" ry="4.0" opacity="0.95" fill="#9c9c9c"/><ellipse cx="30.0" cy="46.0" rx="3.3" ry="3.0" opacity="0.75" fill="#9c9c9c"/><ellipse cx="60.6" cy="36.7" rx="2.0" ry="3.3" opacity="0.6" fill="#9c9c9c"/><ellipse cx="59.3" cy="27.3" rx="2.0" ry="2.0" opacity="0.5" fill="#9c9c9c"/><ellipse cx="9.4" cy="39.3" rx="2.7" ry="9.3" opacity="0.35" fill="#9c9c9c"/><ellipse cx="36.0" cy="50.7" rx="3.3" ry="2.7" opacity="0.35" fill="#9c9c9c"/><ellipse cx="52.0" cy="33.3" rx="2.3" ry="2.0" opacity="0.5" fill="#9c9c9c"/><ellipse cx="36.0" cy="57.3" rx="20.0" ry="8.7" opacity="0.6" fill="#e6e6e6" transform="rotate(-10 36.0 57.3)"/><ellipse cx="56.0" cy="49.3" rx="3.3" ry="6.7" opacity="0.5" fill="#e6e6e6" transform="rotate(20 56.0 49.3)"/><ellipse cx="46.7" cy="43.3" rx="2.0" ry="2.0" opacity="0.9" fill="#f2f2f2"/><ellipse cx="39.3" cy="20.0" rx="8.0" ry="2.3" opacity="0.55" fill="#dedede" transform="rotate(25 39.3 20.0)"/><ellipse cx="37.3" cy="29.3" rx="2.0" ry="4.0" opacity="0.6" fill="#dcdcdc" transform="rotate(-30 37.3 29.3)"/></g><circle cx="36" cy="36" r="33.3" fill="#fff" filter="url(#md)" opacity=".22"/><circle cx="36" cy="36" r="33.3" fill="#fff" filter="url(#mn)" opacity=".6"/></g><path d="M36.00 1.40 A34.6 34.6 0 0 0 36.00 70.60 L36.00 1.40 Z" fill="#e8aa30" filter="url(#gt)"/></svg><div class="lbl"><span>Prvá</span><span>štvrtina</span></div></div>
<div class="cell" style="left:1202.6px;top:518px"><div class="num">6</div><svg class="moon" viewBox="0 0 72 72"><g clip-path="url(#mc)"><circle cx="36" cy="36" r="33.3" fill="url(#mg)"/><g filter="url(#mb)"><ellipse cx="23.3" cy="20.7" rx="7.3" ry="6.0" opacity="0.9" fill="#9c9c9c" transform="rotate(-20 23.3 20.7)"/><ellipse cx="27.3" cy="32.0" rx="11.0" ry="8.3" opacity="0.9" fill="#9c9c9c" transform="rotate(-25 27.3 32.0)"/><ellipse cx="19.4" cy="26.7" rx="4.0" ry="4.0" opacity="0.7" fill="#9c9c9c"/><ellipse cx="41.3" cy="39.0" rx="6.3" ry="5.7" opacity="0.85" fill="#9c9c9c" transform="rotate(20 41.3 39.0)"/><ellipse cx="44.8" cy="25.5" rx="4.4" ry="4.0" opacity="0.95" fill="#9c9c9c"/><ellipse cx="30.0" cy="46.0" rx="3.3" ry="3.0" opacity="0.75" fill="#9c9c9c"/><ellipse cx="60.6" cy="36.7" rx="2.0" ry="3.3" opacity="0.6" fill="#9c9c9c"/><ellipse cx="59.3" cy="27.3" rx="2.0" ry="2.0" opacity="0.5" fill="#9c9c9c"/><ellipse cx="9.4" cy="39.3" rx="2.7" ry="9.3" opacity="0.35" fill="#9c9c9c"/><ellipse cx="36.0" cy="50.7" rx="3.3" ry="2.7" opacity="0.35" fill="#9c9c9c"/><ellipse cx="52.0" cy="33.3" rx="2.3" ry="2.0" opacity="0.5" fill="#9c9c9c"/><ellipse cx="36.0" cy="57.3" rx="20.0" ry="8.7" opacity="0.6" fill="#e6e6e6" transform="rotate(-10 36.0 57.3)"/><ellipse cx="56.0" cy="49.3" rx="3.3" ry="6.7" opacity="0.5" fill="#e6e6e6" transform="rotate(20 56.0 49.3)"/><ellipse cx="46.7" cy="43.3" rx="2.0" ry="2.0" opacity="0.9" fill="#f2f2f2"/><ellipse cx="39.3" cy="20.0" rx="8.0" ry="2.3" opacity="0.55" fill="#dedede" transform="rotate(25 39.3 20.0)"/><ellipse cx="37.3" cy="29.3" rx="2.0" ry="4.0" opacity="0.6" fill="#dcdcdc" transform="rotate(-30 37.3 29.3)"/></g><circle cx="36" cy="36" r="33.3" fill="#fff" filter="url(#md)" opacity=".22"/><circle cx="36" cy="36" r="33.3" fill="#fff" filter="url(#mn)" opacity=".6"/></g><path d="M22.78 4.03 A34.6 34.6 0 0 0 22.78 67.97 A138.90 138.90 0 0 1 22.78 4.03 Z" fill="#e8aa30" filter="url(#gt)" transform="rotate(-5 36 36)"/></svg><div class="lbl"><span class="w">Dorastajúci</span><span>mesiac</span></div></div>
<div class="cell" style="left:1419.75px;top:518px"><div class="num">7</div><svg class="moon" viewBox="0 0 72 72"><g clip-path="url(#mc)"><circle cx="36" cy="36" r="33.3" fill="url(#mg)"/><g filter="url(#mb)"><ellipse cx="23.3" cy="20.7" rx="7.3" ry="6.0" opacity="0.9" fill="#9c9c9c" transform="rotate(-20 23.3 20.7)"/><ellipse cx="27.3" cy="32.0" rx="11.0" ry="8.3" opacity="0.9" fill="#9c9c9c" transform="rotate(-25 27.3 32.0)"/><ellipse cx="19.4" cy="26.7" rx="4.0" ry="4.0" opacity="0.7" fill="#9c9c9c"/><ellipse cx="41.3" cy="39.0" rx="6.3" ry="5.7" opacity="0.85" fill="#9c9c9c" transform="rotate(20 41.3 39.0)"/><ellipse cx="44.8" cy="25.5" rx="4.4" ry="4.0" opacity="0.95" fill="#9c9c9c"/><ellipse cx="30.0" cy="46.0" rx="3.3" ry="3.0" opacity="0.75" fill="#9c9c9c"/><ellipse cx="60.6" cy="36.7" rx="2.0" ry="3.3" opacity="0.6" fill="#9c9c9c"/><ellipse cx="59.3" cy="27.3" rx="2.0" ry="2.0" opacity="0.5" fill="#9c9c9c"/><ellipse cx="9.4" cy="39.3" rx="2.7" ry="9.3" opacity="0.35" fill="#9c9c9c"/><ellipse cx="36.0" cy="50.7" rx="3.3" ry="2.7" opacity="0.35" fill="#9c9c9c"/><ellipse cx="52.0" cy="33.3" rx="2.3" ry="2.0" opacity="0.5" fill="#9c9c9c"/><ellipse cx="36.0" cy="57.3" rx="20.0" ry="8.7" opacity="0.6" fill="#e6e6e6" transform="rotate(-10 36.0 57.3)"/><ellipse cx="56.0" cy="49.3" rx="3.3" ry="6.7" opacity="0.5" fill="#e6e6e6" transform="rotate(20 56.0 49.3)"/><ellipse cx="46.7" cy="43.3" rx="2.0" ry="2.0" opacity="0.9" fill="#f2f2f2"/><ellipse cx="39.3" cy="20.0" rx="8.0" ry="2.3" opacity="0.55" fill="#dedede" transform="rotate(25 39.3 20.0)"/><ellipse cx="37.3" cy="29.3" rx="2.0" ry="4.0" opacity="0.6" fill="#dcdcdc" transform="rotate(-30 37.3 29.3)"/></g><circle cx="36" cy="36" r="33.3" fill="#fff" filter="url(#md)" opacity=".22"/><circle cx="36" cy="36" r="33.3" fill="#fff" filter="url(#mn)" opacity=".6"/></g><path d="M20.89 4.88 A34.6 34.6 0 0 0 20.89 67.12 A115.76 115.76 0 0 1 20.89 4.88 Z" fill="#e8aa30" filter="url(#gt)" transform="rotate(-5 36 36)"/></svg><div class="lbl"><span class="w">Dorastajúci</span><span>mesiac</span></div></div>
<div class="cell" style="left:1636.9px;top:518px"><div class="num">8</div><svg class="moon" viewBox="0 0 72 72"><g clip-path="url(#mc)"><circle cx="36" cy="36" r="33.3" fill="url(#mg)"/><g filter="url(#mb)"><ellipse cx="23.3" cy="20.7" rx="7.3" ry="6.0" opacity="0.9" fill="#9c9c9c" transform="rotate(-20 23.3 20.7)"/><ellipse cx="27.3" cy="32.0" rx="11.0" ry="8.3" opacity="0.9" fill="#9c9c9c" transform="rotate(-25 27.3 32.0)"/><ellipse cx="19.4" cy="26.7" rx="4.0" ry="4.0" opacity="0.7" fill="#9c9c9c"/><ellipse cx="41.3" cy="39.0" rx="6.3" ry="5.7" opacity="0.85" fill="#9c9c9c" transform="rotate(20 41.3 39.0)"/><ellipse cx="44.8" cy="25.5" rx="4.4" ry="4.0" opacity="0.95" fill="#9c9c9c"/><ellipse cx="30.0" cy="46.0" rx="3.3" ry="3.0" opacity="0.75" fill="#9c9c9c"/><ellipse cx="60.6" cy="36.7" rx="2.0" ry="3.3" opacity="0.6" fill="#9c9c9c"/><ellipse cx="59.3" cy="27.3" rx="2.0" ry="2.0" opacity="0.5" fill="#9c9c9c"/><ellipse cx="9.4" cy="39.3" rx="2.7" ry="9.3" opacity="0.35" fill="#9c9c9c"/><ellipse cx="36.0" cy="50.7" rx="3.3" ry="2.7" opacity="0.35" fill="#9c9c9c"/><ellipse cx="52.0" cy="33.3" rx="2.3" ry="2.0" opacity="0.5" fill="#9c9c9c"/><ellipse cx="36.0" cy="57.3" rx="20.0" ry="8.7" opacity="0.6" fill="#e6e6e6" transform="rotate(-10 36.0 57.3)"/><ellipse cx="56.0" cy="49.3" rx="3.3" ry="6.7" opacity="0.5" fill="#e6e6e6" transform="rotate(20 56.0 49.3)"/><ellipse cx="46.7" cy="43.3" rx="2.0" ry="2.0" opacity="0.9" fill="#f2f2f2"/><ellipse cx="39.3" cy="20.0" rx="8.0" ry="2.3" opacity="0.55" fill="#dedede" transform="rotate(25 39.3 20.0)"/><ellipse cx="37.3" cy="29.3" rx="2.0" ry="4.0" opacity="0.6" fill="#dcdcdc" transform="rotate(-30 37.3 29.3)"/></g><circle cx="36" cy="36" r="33.3" fill="#fff" filter="url(#md)" opacity=".22"/><circle cx="36" cy="36" r="33.3" fill="#fff" filter="url(#mn)" opacity=".6"/></g><path d="M19.00 5.87 A34.6 34.6 0 0 0 19.00 66.13 A97.08 97.08 0 0 1 19.00 5.87 Z" fill="#e8aa30" filter="url(#gt)" transform="rotate(-4 36 36)"/></svg><div class="lbl"><span class="w">Dorastajúci</span><span>mesiac</span></div></div>
<div class="cell" style="left:334.0px;top:666px"><div class="num">9</div><svg class="moon" viewBox="0 0 72 72"><g clip-path="url(#mc)"><circle cx="36" cy="36" r="33.3" fill="url(#mg)"/><g filter="url(#mb)"><ellipse cx="23.3" cy="20.7" rx="7.3" ry="6.0" opacity="0.9" fill="#9c9c9c" transform="rotate(-20 23.3 20.7)"/><ellipse cx="27.3" cy="32.0" rx="11.0" ry="8.3" opacity="0.9" fill="#9c9c9c" transform="rotate(-25 27.3 32.0)"/><ellipse cx="19.4" cy="26.7" rx="4.0" ry="4.0" opacity="0.7" fill="#9c9c9c"/><ellipse cx="41.3" cy="39.0" rx="6.3" ry="5.7" opacity="0.85" fill="#9c9c9c" transform="rotate(20 41.3 39.0)"/><ellipse cx="44.8" cy="25.5" rx="4.4" ry="4.0" opacity="0.95" fill="#9c9c9c"/><ellipse cx="30.0" cy="46.0" rx="3.3" ry="3.0" opacity="0.75" fill="#9c9c9c"/><ellipse cx="60.6" cy="36.7" rx="2.0" ry="3.3" opacity="0.6" fill="#9c9c9c"/><ellipse cx="59.3" cy="27.3" rx="2.0" ry="2.0" opacity="0.5" fill="#9c9c9c"/><ellipse cx="9.4" cy="39.3" rx="2.7" ry="9.3" opacity="0.35" fill="#9c9c9c"/><ellipse cx="36.0" cy="50.7" rx="3.3" ry="2.7" opacity="0.35" fill="#9c9c9c"/><ellipse cx="52.0" cy="33.3" rx="2.3" ry="2.0" opacity="0.5" fill="#9c9c9c"/><ellipse cx="36.0" cy="57.3" rx="20.0" ry="8.7" opacity="0.6" fill="#e6e6e6" transform="rotate(-10 36.0 57.3)"/><ellipse cx="56.0" cy="49.3" rx="3.3" ry="6.7" opacity="0.5" fill="#e6e6e6" transform="rotate(20 56.0 49.3)"/><ellipse cx="46.7" cy="43.3" rx="2.0" ry="2.0" opacity="0.9" fill="#f2f2f2"/><ellipse cx="39.3" cy="20.0" rx="8.0" ry="2.3" opacity="0.55" fill="#dedede" transform="rotate(25 39.3 20.0)"/><ellipse cx="37.3" cy="29.3" rx="2.0" ry="4.0" opacity="0.6" fill="#dcdcdc" transform="rotate(-30 37.3 29.3)"/></g><circle cx="36" cy="36" r="33.3" fill="#fff" filter="url(#md)" opacity=".22"/><circle cx="36" cy="36" r="33.3" fill="#fff" filter="url(#mn)" opacity=".6"/></g><path d="M18.62 6.08 A34.6 34.6 0 0 0 18.62 65.92 A93.75 93.75 0 0 1 18.62 6.08 Z" fill="#e8aa30" filter="url(#gt)" transform="rotate(-3 36 36)"/></svg><div class="lbl"><span class="w">Dorastajúci</span><span>mesiac</span></div></div>
<div class="cell" style="left:551.15px;top:666px"><div class="num">10</div><svg class="moon" viewBox="0 0 72 72"><g clip-path="url(#mc)"><circle cx="36" cy="36" r="33.3" fill="url(#mg)"/><g filter="url(#mb)"><ellipse cx="23.3" cy="20.7" rx="7.3" ry="6.0" opacity="0.9" fill="#9c9c9c" transform="rotate(-20 23.3 20.7)"/><ellipse cx="27.3" cy="32.0" rx="11.0" ry="8.3" opacity="0.9" fill="#9c9c9c" transform="rotate(-25 27.3 32.0)"/><ellipse cx="19.4" cy="26.7" rx="4.0" ry="4.0" opacity="0.7" fill="#9c9c9c"/><ellipse cx="41.3" cy="39.0" rx="6.3" ry="5.7" opacity="0.85" fill="#9c9c9c" transform="rotate(20 41.3 39.0)"/><ellipse cx="44.8" cy="25.5" rx="4.4" ry="4.0" opacity="0.95" fill="#9c9c9c"/><ellipse cx="30.0" cy="46.0" rx="3.3" ry="3.0" opacity="0.75" fill="#9c9c9c"/><ellipse cx="60.6" cy="36.7" rx="2.0" ry="3.3" opacity="0.6" fill="#9c9c9c"/><ellipse cx="59.3" cy="27.3" rx="2.0" ry="2.0" opacity="0.5" fill="#9c9c9c"/><ellipse cx="9.4" cy="39.3" rx="2.7" ry="9.3" opacity="0.35" fill="#9c9c9c"/><ellipse cx="36.0" cy="50.7" rx="3.3" ry="2.7" opacity="0.35" fill="#9c9c9c"/><ellipse cx="52.0" cy="33.3" rx="2.3" ry="2.0" opacity="0.5" fill="#9c9c9c"/><ellipse cx="36.0" cy="57.3" rx="20.0" ry="8.7" opacity="0.6" fill="#e6e6e6" transform="rotate(-10 36.0 57.3)"/><ellipse cx="56.0" cy="49.3" rx="3.3" ry="6.7" opacity="0.5" fill="#e6e6e6" transform="rotate(20 56.0 49.3)"/><ellipse cx="46.7" cy="43.3" rx="2.0" ry="2.0" opacity="0.9" fill="#f2f2f2"/><ellipse cx="39.3" cy="20.0" rx="8.0" ry="2.3" opacity="0.55" fill="#dedede" transform="rotate(25 39.3 20.0)"/><ellipse cx="37.3" cy="29.3" rx="2.0" ry="4.0" opacity="0.6" fill="#dcdcdc" transform="rotate(-30 37.3 29.3)"/></g><circle cx="36" cy="36" r="33.3" fill="#fff" filter="url(#md)" opacity=".22"/><circle cx="36" cy="36" r="33.3" fill="#fff" filter="url(#mn)" opacity=".6"/></g><path d="M16.18 7.64 A34.6 34.6 0 0 0 16.18 64.36 A83.65 83.65 0 0 1 16.18 7.64 Z" fill="#e8aa30" filter="url(#gt)" transform="rotate(-3 36 36)"/></svg><div class="lbl"><span class="w">Dorastajúci</span><span>mesiac</span></div></div>
<div class="cell" style="left:768.3px;top:666px"><div class="num">11</div><svg class="moon" viewBox="0 0 72 72"><g clip-path="url(#mc)"><circle cx="36" cy="36" r="33.3" fill="url(#mg)"/><g filter="url(#mb)"><ellipse cx="23.3" cy="20.7" rx="7.3" ry="6.0" opacity="0.9" fill="#9c9c9c" transform="rotate(-20 23.3 20.7)"/><ellipse cx="27.3" cy="32.0" rx="11.0" ry="8.3" opacity="0.9" fill="#9c9c9c" transform="rotate(-25 27.3 32.0)"/><ellipse cx="19.4" cy="26.7" rx="4.0" ry="4.0" opacity="0.7" fill="#9c9c9c"/><ellipse cx="41.3" cy="39.0" rx="6.3" ry="5.7" opacity="0.85" fill="#9c9c9c" transform="rotate(20 41.3 39.0)"/><ellipse cx="44.8" cy="25.5" rx="4.4" ry="4.0" opacity="0.95" fill="#9c9c9c"/><ellipse cx="30.0" cy="46.0" rx="3.3" ry="3.0" opacity="0.75" fill="#9c9c9c"/><ellipse cx="60.6" cy="36.7" rx="2.0" ry="3.3" opacity="0.6" fill="#9c9c9c"/><ellipse cx="59.3" cy="27.3" rx="2.0" ry="2.0" opacity="0.5" fill="#9c9c9c"/><ellipse cx="9.4" cy="39.3" rx="2.7" ry="9.3" opacity="0.35" fill="#9c9c9c"/><ellipse cx="36.0" cy="50.7" rx="3.3" ry="2.7" opacity="0.35" fill="#9c9c9c"/><ellipse cx="52.0" cy="33.3" rx="2.3" ry="2.0" opacity="0.5" fill="#9c9c9c"/><ellipse cx="36.0" cy="57.3" rx="20.0" ry="8.7" opacity="0.6" fill="#e6e6e6" transform="rotate(-10 36.0 57.3)"/><ellipse cx="56.0" cy="49.3" rx="3.3" ry="6.7" opacity="0.5" fill="#e6e6e6" transform="rotate(20 56.0 49.3)"/><ellipse cx="46.7" cy="43.3" rx="2.0" ry="2.0" opacity="0.9" fill="#f2f2f2"/><ellipse cx="39.3" cy="20.0" rx="8.0" ry="2.3" opacity="0.55" fill="#dedede" transform="rotate(25 39.3 20.0)"/><ellipse cx="37.3" cy="29.3" rx="2.0" ry="4.0" opacity="0.6" fill="#dcdcdc" transform="rotate(-30 37.3 29.3)"/></g><circle cx="36" cy="36" r="33.3" fill="#fff" filter="url(#md)" opacity=".22"/><circle cx="36" cy="36" r="33.3" fill="#fff" filter="url(#mn)" opacity=".6"/></g></svg><div class="lbl"><span><b>Spln</b></span></div></div>
<div class="cell" style="left:985.45px;top:666px"><div class="num">12</div><svg class="moon" viewBox="0 0 72 72"><g clip-path="url(#mc)"><circle cx="36" cy="36" r="33.3" fill="url(#mg)"/><g filter="url(#mb)"><ellipse cx="23.3" cy="20.7" rx="7.3" ry="6.0" opacity="0.9" fill="#9c9c9c" transform="rotate(-20 23.3 20.7)"/><ellipse cx="27.3" cy="32.0" rx="11.0" ry="8.3" opacity="0.9" fill="#9c9c9c" transform="rotate(-25 27.3 32.0)"/><ellipse cx="19.4" cy="26.7" rx="4.0" ry="4.0" opacity="0.7" fill="#9c9c9c"/><ellipse cx="41.3" cy="39.0" rx="6.3" ry="5.7" opacity="0.85" fill="#9c9c9c" transform="rotate(20 41.3 39.0)"/><ellipse cx="44.8" cy="25.5" rx="4.4" ry="4.0" opacity="0.95" fill="#9c9c9c"/><ellipse cx="30.0" cy="46.0" rx="3.3" ry="3.0" opacity="0.75" fill="#9c9c9c"/><ellipse cx="60.6" cy="36.7" rx="2.0" ry="3.3" opacity="0.6" fill="#9c9c9c"/><ellipse cx="59.3" cy="27.3" rx="2.0" ry="2.0" opacity="0.5" fill="#9c9c9c"/><ellipse cx="9.4" cy="39.3" rx="2.7" ry="9.3" opacity="0.35" fill="#9c9c9c"/><ellipse cx="36.0" cy="50.7" rx="3.3" ry="2.7" opacity="0.35" fill="#9c9c9c"/><ellipse cx="52.0" cy="33.3" rx="2.3" ry="2.0" opacity="0.5" fill="#9c9c9c"/><ellipse cx="36.0" cy="57.3" rx="20.0" ry="8.7" opacity="0.6" fill="#e6e6e6" transform="rotate(-10 36.0 57.3)"/><ellipse cx="56.0" cy="49.3" rx="3.3" ry="6.7" opacity="0.5" fill="#e6e6e6" transform="rotate(20 56.0 49.3)"/><ellipse cx="46.7" cy="43.3" rx="2.0" ry="2.0" opacity="0.9" fill="#f2f2f2"/><ellipse cx="39.3" cy="20.0" rx="8.0" ry="2.3" opacity="0.55" fill="#dedede" transform="rotate(25 39.3 20.0)"/><ellipse cx="37.3" cy="29.3" rx="2.0" ry="4.0" opacity="0.6" fill="#dcdcdc" transform="rotate(-30 37.3 29.3)"/></g><circle cx="36" cy="36" r="33.3" fill="#fff" filter="url(#md)" opacity=".22"/><circle cx="36" cy="36" r="33.3" fill="#fff" filter="url(#mn)" opacity=".6"/></g></svg><div class="lbl"><span><b>Spln</b></span></div></div>
<div class="cell" style="left:1202.6px;top:666px"><div class="num">13</div><svg class="moon" viewBox="0 0 72 72"><g clip-path="url(#mc)"><circle cx="36" cy="36" r="33.3" fill="url(#mg)"/><g filter="url(#mb)"><ellipse cx="23.3" cy="20.7" rx="7.3" ry="6.0" opacity="0.9" fill="#9c9c9c" transform="rotate(-20 23.3 20.7)"/><ellipse cx="27.3" cy="32.0" rx="11.0" ry="8.3" opacity="0.9" fill="#9c9c9c" transform="rotate(-25 27.3 32.0)"/><ellipse cx="19.4" cy="26.7" rx="4.0" ry="4.0" opacity="0.7" fill="#9c9c9c"/><ellipse cx="41.3" cy="39.0" rx="6.3" ry="5.7" opacity="0.85" fill="#9c9c9c" transform="rotate(20 41.3 39.0)"/><ellipse cx="44.8" cy="25.5" rx="4.4" ry="4.0" opacity="0.95" fill="#9c9c9c"/><ellipse cx="30.0" cy="46.0" rx="3.3" ry="3.0" opacity="0.75" fill="#9c9c9c"/><ellipse cx="60.6" cy="36.7" rx="2.0" ry="3.3" opacity="0.6" fill="#9c9c9c"/><ellipse cx="59.3" cy="27.3" rx="2.0" ry="2.0" opacity="0.5" fill="#9c9c9c"/><ellipse cx="9.4" cy="39.3" rx="2.7" ry="9.3" opacity="0.35" fill="#9c9c9c"/><ellipse cx="36.0" cy="50.7" rx="3.3" ry="2.7" opacity="0.35" fill="#9c9c9c"/><ellipse cx="52.0" cy="33.3" rx="2.3" ry="2.0" opacity="0.5" fill="#9c9c9c"/><ellipse cx="36.0" cy="57.3" rx="20.0" ry="8.7" opacity="0.6" fill="#e6e6e6" transform="rotate(-10 36.0 57.3)"/><ellipse cx="56.0" cy="49.3" rx="3.3" ry="6.7" opacity="0.5" fill="#e6e6e6" transform="rotate(20 56.0 49.3)"/><ellipse cx="46.7" cy="43.3" rx="2.0" ry="2.0" opacity="0.9" fill="#f2f2f2"/><ellipse cx="39.3" cy="20.0" rx="8.0" ry="2.3" opacity="0.55" fill="#dedede" transform="rotate(25 39.3 20.0)"/><ellipse cx="37.3" cy="29.3" rx="2.0" ry="4.0" opacity="0.6" fill="#dcdcdc" transform="rotate(-30 37.3 29.3)"/></g><circle cx="36" cy="36" r="33.3" fill="#fff" filter="url(#md)" opacity=".22"/><circle cx="36" cy="36" r="33.3" fill="#fff" filter="url(#mn)" opacity=".6"/></g><path d="M56.65 8.24 A34.6 34.6 0 0 1 56.65 63.76 A77.23 77.23 0 0 0 56.65 8.24 Z" fill="#e8aa30" filter="url(#gt)" transform="rotate(5 36 36)"/></svg><div class="lbl"><span class="w">Ubúdajúci</span><span>mesiac</span></div></div>
<div class="cell" style="left:1419.75px;top:666px"><div class="num">14</div><svg class="moon" viewBox="0 0 72 72"><g clip-path="url(#mc)"><circle cx="36" cy="36" r="33.3" fill="url(#mg)"/><g filter="url(#mb)"><ellipse cx="23.3" cy="20.7" rx="7.3" ry="6.0" opacity="0.9" fill="#9c9c9c" transform="rotate(-20 23.3 20.7)"/><ellipse cx="27.3" cy="32.0" rx="11.0" ry="8.3" opacity="0.9" fill="#9c9c9c" transform="rotate(-25 27.3 32.0)"/><ellipse cx="19.4" cy="26.7" rx="4.0" ry="4.0" opacity="0.7" fill="#9c9c9c"/><ellipse cx="41.3" cy="39.0" rx="6.3" ry="5.7" opacity="0.85" fill="#9c9c9c" transform="rotate(20 41.3 39.0)"/><ellipse cx="44.8" cy="25.5" rx="4.4" ry="4.0" opacity="0.95" fill="#9c9c9c"/><ellipse cx="30.0" cy="46.0" rx="3.3" ry="3.0" opacity="0.75" fill="#9c9c9c"/><ellipse cx="60.6" cy="36.7" rx="2.0" ry="3.3" opacity="0.6" fill="#9c9c9c"/><ellipse cx="59.3" cy="27.3" rx="2.0" ry="2.0" opacity="0.5" fill="#9c9c9c"/><ellipse cx="9.4" cy="39.3" rx="2.7" ry="9.3" opacity="0.35" fill="#9c9c9c"/><ellipse cx="36.0" cy="50.7" rx="3.3" ry="2.7" opacity="0.35" fill="#9c9c9c"/><ellipse cx="52.0" cy="33.3" rx="2.3" ry="2.0" opacity="0.5" fill="#9c9c9c"/><ellipse cx="36.0" cy="57.3" rx="20.0" ry="8.7" opacity="0.6" fill="#e6e6e6" transform="rotate(-10 36.0 57.3)"/><ellipse cx="56.0" cy="49.3" rx="3.3" ry="6.7" opacity="0.5" fill="#e6e6e6" transform="rotate(20 56.0 49.3)"/><ellipse cx="46.7" cy="43.3" rx="2.0" ry="2.0" opacity="0.9" fill="#f2f2f2"/><ellipse cx="39.3" cy="20.0" rx="8.0" ry="2.3" opacity="0.55" fill="#dedede" transform="rotate(25 39.3 20.0)"/><ellipse cx="37.3" cy="29.3" rx="2.0" ry="4.0" opacity="0.6" fill="#dcdcdc" transform="rotate(-30 37.3 29.3)"/></g><circle cx="36" cy="36" r="33.3" fill="#fff" filter="url(#md)" opacity=".22"/><circle cx="36" cy="36" r="33.3" fill="#fff" filter="url(#mn)" opacity=".6"/></g><path d="M54.35 6.67 A34.6 34.6 0 0 1 54.35 65.33 A85.70 85.70 0 0 0 54.35 6.67 Z" fill="#e8aa30" filter="url(#gt)" transform="rotate(5 36 36)"/></svg><div class="lbl"><span class="w">Ubúdajúci</span><span>mesiac</span></div></div>
<div class="cell" style="left:1636.9px;top:666px"><div class="num">15</div><svg class="moon" viewBox="0 0 72 72"><g clip-path="url(#mc)"><circle cx="36" cy="36" r="33.3" fill="url(#mg)"/><g filter="url(#mb)"><ellipse cx="23.3" cy="20.7" rx="7.3" ry="6.0" opacity="0.9" fill="#9c9c9c" transform="rotate(-20 23.3 20.7)"/><ellipse cx="27.3" cy="32.0" rx="11.0" ry="8.3" opacity="0.9" fill="#9c9c9c" transform="rotate(-25 27.3 32.0)"/><ellipse cx="19.4" cy="26.7" rx="4.0" ry="4.0" opacity="0.7" fill="#9c9c9c"/><ellipse cx="41.3" cy="39.0" rx="6.3" ry="5.7" opacity="0.85" fill="#9c9c9c" transform="rotate(20 41.3 39.0)"/><ellipse cx="44.8" cy="25.5" rx="4.4" ry="4.0" opacity="0.95" fill="#9c9c9c"/><ellipse cx="30.0" cy="46.0" rx="3.3" ry="3.0" opacity="0.75" fill="#9c9c9c"/><ellipse cx="60.6" cy="36.7" rx="2.0" ry="3.3" opacity="0.6" fill="#9c9c9c"/><ellipse cx="59.3" cy="27.3" rx="2.0" ry="2.0" opacity="0.5" fill="#9c9c9c"/><ellipse cx="9.4" cy="39.3" rx="2.7" ry="9.3" opacity="0.35" fill="#9c9c9c"/><ellipse cx="36.0" cy="50.7" rx="3.3" ry="2.7" opacity="0.35" fill="#9c9c9c"/><ellipse cx="52.0" cy="33.3" rx="2.3" ry="2.0" opacity="0.5" fill="#9c9c9c"/><ellipse cx="36.0" cy="57.3" rx="20.0" ry="8.7" opacity="0.6" fill="#e6e6e6" transform="rotate(-10 36.0 57.3)"/><ellipse cx="56.0" cy="49.3" rx="3.3" ry="6.7" opacity="0.5" fill="#e6e6e6" transform="rotate(20 56.0 49.3)"/><ellipse cx="46.7" cy="43.3" rx="2.0" ry="2.0" opacity="0.9" fill="#f2f2f2"/><ellipse cx="39.3" cy="20.0" rx="8.0" ry="2.3" opacity="0.55" fill="#dedede" transform="rotate(25 39.3 20.0)"/><ellipse cx="37.3" cy="29.3" rx="2.0" ry="4.0" opacity="0.6" fill="#dcdcdc" transform="rotate(-30 37.3 29.3)"/></g><circle cx="36" cy="36" r="33.3" fill="#fff" filter="url(#md)" opacity=".22"/><circle cx="36" cy="36" r="33.3" fill="#fff" filter="url(#mn)" opacity=".6"/></g><path d="M53.00 5.87 A34.6 34.6 0 0 1 53.00 66.13 A97.08 97.08 0 0 0 53.00 5.87 Z" fill="#e8aa30" filter="url(#gt)" transform="rotate(5 36 36)"/></svg><div class="lbl"><span class="w">Ubúdajúci</span><span>mesiac</span></div></div>
<div class="cell" style="left:334.0px;top:814px"><div class="num">16</div><svg class="moon" viewBox="0 0 72 72"><g clip-path="url(#mc)"><circle cx="36" cy="36" r="33.3" fill="url(#mg)"/><g filter="url(#mb)"><ellipse cx="23.3" cy="20.7" rx="7.3" ry="6.0" opacity="0.9" fill="#9c9c9c" transform="rotate(-20 23.3 20.7)"/><ellipse cx="27.3" cy="32.0" rx="11.0" ry="8.3" opacity="0.9" fill="#9c9c9c" transform="rotate(-25 27.3 32.0)"/><ellipse cx="19.4" cy="26.7" rx="4.0" ry="4.0" opacity="0.7" fill="#9c9c9c"/><ellipse cx="41.3" cy="39.0" rx="6.3" ry="5.7" opacity="0.85" fill="#9c9c9c" transform="rotate(20 41.3 39.0)"/><ellipse cx="44.8" cy="25.5" rx="4.4" ry="4.0" opacity="0.95" fill="#9c9c9c"/><ellipse cx="30.0" cy="46.0" rx="3.3" ry="3.0" opacity="0.75" fill="#9c9c9c"/><ellipse cx="60.6" cy="36.7" rx="2.0" ry="3.3" opacity="0.6" fill="#9c9c9c"/><ellipse cx="59.3" cy="27.3" rx="2.0" ry="2.0" opacity="0.5" fill="#9c9c9c"/><ellipse cx="9.4" cy="39.3" rx="2.7" ry="9.3" opacity="0.35" fill="#9c9c9c"/><ellipse cx="36.0" cy="50.7" rx="3.3" ry="2.7" opacity="0.35" fill="#9c9c9c"/><ellipse cx="52.0" cy="33.3" rx="2.3" ry="2.0" opacity="0.5" fill="#9c9c9c"/><ellipse cx="36.0" cy="57.3" rx="20.0" ry="8.7" opacity="0.6" fill="#e6e6e6" transform="rotate(-10 36.0 57.3)"/><ellipse cx="56.0" cy="49.3" rx="3.3" ry="6.7" opacity="0.5" fill="#e6e6e6" transform="rotate(20 56.0 49.3)"/><ellipse cx="46.7" cy="43.3" rx="2.0" ry="2.0" opacity="0.9" fill="#f2f2f2"/><ellipse cx="39.3" cy="20.0" rx="8.0" ry="2.3" opacity="0.55" fill="#dedede" transform="rotate(25 39.3 20.0)"/><ellipse cx="37.3" cy="29.3" rx="2.0" ry="4.0" opacity="0.6" fill="#dcdcdc" transform="rotate(-30 37.3 29.3)"/></g><circle cx="36" cy="36" r="33.3" fill="#fff" filter="url(#md)" opacity=".22"/><circle cx="36" cy="36" r="33.3" fill="#fff" filter="url(#mn)" opacity=".6"/></g><path d="M51.65 5.14 A34.6 34.6 0 0 1 51.65 66.86 A110.04 110.04 0 0 0 51.65 5.14 Z" fill="#e8aa30" filter="url(#gt)" transform="rotate(5 36 36)"/></svg><div class="lbl"><span class="w">Ubúdajúci</span><span>mesiac</span></div></div>
<div class="cell" style="left:551.15px;top:814px"><div class="num">17</div><svg class="moon" viewBox="0 0 72 72"><g clip-path="url(#mc)"><circle cx="36" cy="36" r="33.3" fill="url(#mg)"/><g filter="url(#mb)"><ellipse cx="23.3" cy="20.7" rx="7.3" ry="6.0" opacity="0.9" fill="#9c9c9c" transform="rotate(-20 23.3 20.7)"/><ellipse cx="27.3" cy="32.0" rx="11.0" ry="8.3" opacity="0.9" fill="#9c9c9c" transform="rotate(-25 27.3 32.0)"/><ellipse cx="19.4" cy="26.7" rx="4.0" ry="4.0" opacity="0.7" fill="#9c9c9c"/><ellipse cx="41.3" cy="39.0" rx="6.3" ry="5.7" opacity="0.85" fill="#9c9c9c" transform="rotate(20 41.3 39.0)"/><ellipse cx="44.8" cy="25.5" rx="4.4" ry="4.0" opacity="0.95" fill="#9c9c9c"/><ellipse cx="30.0" cy="46.0" rx="3.3" ry="3.0" opacity="0.75" fill="#9c9c9c"/><ellipse cx="60.6" cy="36.7" rx="2.0" ry="3.3" opacity="0.6" fill="#9c9c9c"/><ellipse cx="59.3" cy="27.3" rx="2.0" ry="2.0" opacity="0.5" fill="#9c9c9c"/><ellipse cx="9.4" cy="39.3" rx="2.7" ry="9.3" opacity="0.35" fill="#9c9c9c"/><ellipse cx="36.0" cy="50.7" rx="3.3" ry="2.7" opacity="0.35" fill="#9c9c9c"/><ellipse cx="52.0" cy="33.3" rx="2.3" ry="2.0" opacity="0.5" fill="#9c9c9c"/><ellipse cx="36.0" cy="57.3" rx="20.0" ry="8.7" opacity="0.6" fill="#e6e6e6" transform="rotate(-10 36.0 57.3)"/><ellipse cx="56.0" cy="49.3" rx="3.3" ry="6.7" opacity="0.5" fill="#e6e6e6" transform="rotate(20 56.0 49.3)"/><ellipse cx="46.7" cy="43.3" rx="2.0" ry="2.0" opacity="0.9" fill="#f2f2f2"/><ellipse cx="39.3" cy="20.0" rx="8.0" ry="2.3" opacity="0.55" fill="#dedede" transform="rotate(25 39.3 20.0)"/><ellipse cx="37.3" cy="29.3" rx="2.0" ry="4.0" opacity="0.6" fill="#dcdcdc" transform="rotate(-30 37.3 29.3)"/></g><circle cx="36" cy="36" r="33.3" fill="#fff" filter="url(#md)" opacity=".22"/><circle cx="36" cy="36" r="33.3" fill="#fff" filter="url(#mn)" opacity=".6"/></g><path d="M47.94 3.52 A34.6 34.6 0 0 1 47.94 68.48 A134.52 134.52 0 0 0 47.94 3.52 Z" fill="#e8aa30" filter="url(#gt)" transform="rotate(5 36 36)"/></svg><div class="lbl"><span class="w">Ubúdajúci</span><span>mesiac</span></div></div>
<div class="cell" style="left:768.3px;top:814px"><div class="num">18</div><svg class="moon" viewBox="0 0 72 72"><g clip-path="url(#mc)"><circle cx="36" cy="36" r="33.3" fill="url(#mg)"/><g filter="url(#mb)"><ellipse cx="23.3" cy="20.7" rx="7.3" ry="6.0" opacity="0.9" fill="#9c9c9c" transform="rotate(-20 23.3 20.7)"/><ellipse cx="27.3" cy="32.0" rx="11.0" ry="8.3" opacity="0.9" fill="#9c9c9c" transform="rotate(-25 27.3 32.0)"/><ellipse cx="19.4" cy="26.7" rx="4.0" ry="4.0" opacity="0.7" fill="#9c9c9c"/><ellipse cx="41.3" cy="39.0" rx="6.3" ry="5.7" opacity="0.85" fill="#9c9c9c" transform="rotate(20 41.3 39.0)"/><ellipse cx="44.8" cy="25.5" rx="4.4" ry="4.0" opacity="0.95" fill="#9c9c9c"/><ellipse cx="30.0" cy="46.0" rx="3.3" ry="3.0" opacity="0.75" fill="#9c9c9c"/><ellipse cx="60.6" cy="36.7" rx="2.0" ry="3.3" opacity="0.6" fill="#9c9c9c"/><ellipse cx="59.3" cy="27.3" rx="2.0" ry="2.0" opacity="0.5" fill="#9c9c9c"/><ellipse cx="9.4" cy="39.3" rx="2.7" ry="9.3" opacity="0.35" fill="#9c9c9c"/><ellipse cx="36.0" cy="50.7" rx="3.3" ry="2.7" opacity="0.35" fill="#9c9c9c"/><ellipse cx="52.0" cy="33.3" rx="2.3" ry="2.0" opacity="0.5" fill="#9c9c9c"/><ellipse cx="36.0" cy="57.3" rx="20.0" ry="8.7" opacity="0.6" fill="#e6e6e6" transform="rotate(-10 36.0 57.3)"/><ellipse cx="56.0" cy="49.3" rx="3.3" ry="6.7" opacity="0.5" fill="#e6e6e6" transform="rotate(20 56.0 49.3)"/><ellipse cx="46.7" cy="43.3" rx="2.0" ry="2.0" opacity="0.9" fill="#f2f2f2"/><ellipse cx="39.3" cy="20.0" rx="8.0" ry="2.3" opacity="0.55" fill="#dedede" transform="rotate(25 39.3 20.0)"/><ellipse cx="37.3" cy="29.3" rx="2.0" ry="4.0" opacity="0.6" fill="#dcdcdc" transform="rotate(-30 37.3 29.3)"/></g><circle cx="36" cy="36" r="33.3" fill="#fff" filter="url(#md)" opacity=".22"/><circle cx="36" cy="36" r="33.3" fill="#fff" filter="url(#mn)" opacity=".6"/></g><path d="M43.75 2.28 A34.6 34.6 0 0 1 43.75 69.72 A172.83 172.83 0 0 0 43.75 2.28 Z" fill="#e8aa30" filter="url(#gt)" transform="rotate(5 36 36)"/></svg><div class="lbl"><span class="w">Ubúdajúci</span><span>mesiac</span></div></div>
<div class="cell" style="left:985.45px;top:814px"><div class="num">19</div><svg class="moon" viewBox="0 0 72 72"><g clip-path="url(#mc)"><circle cx="36" cy="36" r="33.3" fill="url(#mg)"/><g filter="url(#mb)"><ellipse cx="23.3" cy="20.7" rx="7.3" ry="6.0" opacity="0.9" fill="#9c9c9c" transform="rotate(-20 23.3 20.7)"/><ellipse cx="27.3" cy="32.0" rx="11.0" ry="8.3" opacity="0.9" fill="#9c9c9c" transform="rotate(-25 27.3 32.0)"/><ellipse cx="19.4" cy="26.7" rx="4.0" ry="4.0" opacity="0.7" fill="#9c9c9c"/><ellipse cx="41.3" cy="39.0" rx="6.3" ry="5.7" opacity="0.85" fill="#9c9c9c" transform="rotate(20 41.3 39.0)"/><ellipse cx="44.8" cy="25.5" rx="4.4" ry="4.0" opacity="0.95" fill="#9c9c9c"/><ellipse cx="30.0" cy="46.0" rx="3.3" ry="3.0" opacity="0.75" fill="#9c9c9c"/><ellipse cx="60.6" cy="36.7" rx="2.0" ry="3.3" opacity="0.6" fill="#9c9c9c"/><ellipse cx="59.3" cy="27.3" rx="2.0" ry="2.0" opacity="0.5" fill="#9c9c9c"/><ellipse cx="9.4" cy="39.3" rx="2.7" ry="9.3" opacity="0.35" fill="#9c9c9c"/><ellipse cx="36.0" cy="50.7" rx="3.3" ry="2.7" opacity="0.35" fill="#9c9c9c"/><ellipse cx="52.0" cy="33.3" rx="2.3" ry="2.0" opacity="0.5" fill="#9c9c9c"/><ellipse cx="36.0" cy="57.3" rx="20.0" ry="8.7" opacity="0.6" fill="#e6e6e6" transform="rotate(-10 36.0 57.3)"/><ellipse cx="56.0" cy="49.3" rx="3.3" ry="6.7" opacity="0.5" fill="#e6e6e6" transform="rotate(20 56.0 49.3)"/><ellipse cx="46.7" cy="43.3" rx="2.0" ry="2.0" opacity="0.9" fill="#f2f2f2"/><ellipse cx="39.3" cy="20.0" rx="8.0" ry="2.3" opacity="0.55" fill="#dedede" transform="rotate(25 39.3 20.0)"/><ellipse cx="37.3" cy="29.3" rx="2.0" ry="4.0" opacity="0.6" fill="#dcdcdc" transform="rotate(-30 37.3 29.3)"/></g><circle cx="36" cy="36" r="33.3" fill="#fff" filter="url(#md)" opacity=".22"/><circle cx="36" cy="36" r="33.3" fill="#fff" filter="url(#mn)" opacity=".6"/></g><path d="M36.00 1.40 A34.6 34.6 0 0 1 36.00 70.60 L36.00 1.40 Z" fill="#e8aa30" filter="url(#gt)"/></svg><div class="lbl"><span class="w">Posledná</span><span>štvrtina</span></div></div>
<div class="cell" style="left:1202.6px;top:814px"><div class="num">20</div><svg class="moon" viewBox="0 0 72 72"><g clip-path="url(#mc)"><circle cx="36" cy="36" r="33.3" fill="url(#mg)"/><g filter="url(#mb)"><ellipse cx="23.3" cy="20.7" rx="7.3" ry="6.0" opacity="0.9" fill="#9c9c9c" transform="rotate(-20 23.3 20.7)"/><ellipse cx="27.3" cy="32.0" rx="11.0" ry="8.3" opacity="0.9" fill="#9c9c9c" transform="rotate(-25 27.3 32.0)"/><ellipse cx="19.4" cy="26.7" rx="4.0" ry="4.0" opacity="0.7" fill="#9c9c9c"/><ellipse cx="41.3" cy="39.0" rx="6.3" ry="5.7" opacity="0.85" fill="#9c9c9c" transform="rotate(20 41.3 39.0)"/><ellipse cx="44.8" cy="25.5" rx="4.4" ry="4.0" opacity="0.95" fill="#9c9c9c"/><ellipse cx="30.0" cy="46.0" rx="3.3" ry="3.0" opacity="0.75" fill="#9c9c9c"/><ellipse cx="60.6" cy="36.7" rx="2.0" ry="3.3" opacity="0.6" fill="#9c9c9c"/><ellipse cx="59.3" cy="27.3" rx="2.0" ry="2.0" opacity="0.5" fill="#9c9c9c"/><ellipse cx="9.4" cy="39.3" rx="2.7" ry="9.3" opacity="0.35" fill="#9c9c9c"/><ellipse cx="36.0" cy="50.7" rx="3.3" ry="2.7" opacity="0.35" fill="#9c9c9c"/><ellipse cx="52.0" cy="33.3" rx="2.3" ry="2.0" opacity="0.5" fill="#9c9c9c"/><ellipse cx="36.0" cy="57.3" rx="20.0" ry="8.7" opacity="0.6" fill="#e6e6e6" transform="rotate(-10 36.0 57.3)"/><ellipse cx="56.0" cy="49.3" rx="3.3" ry="6.7" opacity="0.5" fill="#e6e6e6" transform="rotate(20 56.0 49.3)"/><ellipse cx="46.7" cy="43.3" rx="2.0" ry="2.0" opacity="0.9" fill="#f2f2f2"/><ellipse cx="39.3" cy="20.0" rx="8.0" ry="2.3" opacity="0.55" fill="#dedede" transform="rotate(25 39.3 20.0)"/><ellipse cx="37.3" cy="29.3" rx="2.0" ry="4.0" opacity="0.6" fill="#dcdcdc" transform="rotate(-30 37.3 29.3)"/></g><circle cx="36" cy="36" r="33.3" fill="#fff" filter="url(#md)" opacity=".22"/><circle cx="36" cy="36" r="33.3" fill="#fff" filter="url(#mn)" opacity=".6"/></g><path d="M36.00 1.40 A34.6 34.6 0 0 1 36.00 70.60 L36.00 1.40 Z" fill="#e8aa30" filter="url(#gt)"/></svg><div class="lbl"><span class="w">Posledná</span><span>štvrtina</span></div></div>
<div class="cell" style="left:1419.75px;top:814px"><div class="num">21</div><svg class="moon" viewBox="0 0 72 72"><g clip-path="url(#mc)"><circle cx="36" cy="36" r="33.3" fill="url(#mg)"/><g filter="url(#mb)"><ellipse cx="23.3" cy="20.7" rx="7.3" ry="6.0" opacity="0.9" fill="#9c9c9c" transform="rotate(-20 23.3 20.7)"/><ellipse cx="27.3" cy="32.0" rx="11.0" ry="8.3" opacity="0.9" fill="#9c9c9c" transform="rotate(-25 27.3 32.0)"/><ellipse cx="19.4" cy="26.7" rx="4.0" ry="4.0" opacity="0.7" fill="#9c9c9c"/><ellipse cx="41.3" cy="39.0" rx="6.3" ry="5.7" opacity="0.85" fill="#9c9c9c" transform="rotate(20 41.3 39.0)"/><ellipse cx="44.8" cy="25.5" rx="4.4" ry="4.0" opacity="0.95" fill="#9c9c9c"/><ellipse cx="30.0" cy="46.0" rx="3.3" ry="3.0" opacity="0.75" fill="#9c9c9c"/><ellipse cx="60.6" cy="36.7" rx="2.0" ry="3.3" opacity="0.6" fill="#9c9c9c"/><ellipse cx="59.3" cy="27.3" rx="2.0" ry="2.0" opacity="0.5" fill="#9c9c9c"/><ellipse cx="9.4" cy="39.3" rx="2.7" ry="9.3" opacity="0.35" fill="#9c9c9c"/><ellipse cx="36.0" cy="50.7" rx="3.3" ry="2.7" opacity="0.35" fill="#9c9c9c"/><ellipse cx="52.0" cy="33.3" rx="2.3" ry="2.0" opacity="0.5" fill="#9c9c9c"/><ellipse cx="36.0" cy="57.3" rx="20.0" ry="8.7" opacity="0.6" fill="#e6e6e6" transform="rotate(-10 36.0 57.3)"/><ellipse cx="56.0" cy="49.3" rx="3.3" ry="6.7" opacity="0.5" fill="#e6e6e6" transform="rotate(20 56.0 49.3)"/><ellipse cx="46.7" cy="43.3" rx="2.0" ry="2.0" opacity="0.9" fill="#f2f2f2"/><ellipse cx="39.3" cy="20.0" rx="8.0" ry="2.3" opacity="0.55" fill="#dedede" transform="rotate(25 39.3 20.0)"/><ellipse cx="37.3" cy="29.3" rx="2.0" ry="4.0" opacity="0.6" fill="#dcdcdc" transform="rotate(-30 37.3 29.3)"/></g><circle cx="36" cy="36" r="33.3" fill="#fff" filter="url(#md)" opacity=".22"/><circle cx="36" cy="36" r="33.3" fill="#fff" filter="url(#mn)" opacity=".6"/></g><path d="M36.00 1.40 A34.6 34.6 0 0 1 36.00 70.60 A17.30 34.60 0 0 1 36.00 1.40 Z" fill="#e8aa30" filter="url(#gt)" transform="rotate(-8 36 36)"/></svg><div class="lbl"><span class="w">Ubúdajúci</span><span class="w">polmesiac</span></div></div>
<div class="cell" style="left:1636.9px;top:814px"><div class="num">22</div><svg class="moon" viewBox="0 0 72 72"><g clip-path="url(#mc)"><circle cx="36" cy="36" r="33.3" fill="url(#mg)"/><g filter="url(#mb)"><ellipse cx="23.3" cy="20.7" rx="7.3" ry="6.0" opacity="0.9" fill="#9c9c9c" transform="rotate(-20 23.3 20.7)"/><ellipse cx="27.3" cy="32.0" rx="11.0" ry="8.3" opacity="0.9" fill="#9c9c9c" transform="rotate(-25 27.3 32.0)"/><ellipse cx="19.4" cy="26.7" rx="4.0" ry="4.0" opacity="0.7" fill="#9c9c9c"/><ellipse cx="41.3" cy="39.0" rx="6.3" ry="5.7" opacity="0.85" fill="#9c9c9c" transform="rotate(20 41.3 39.0)"/><ellipse cx="44.8" cy="25.5" rx="4.4" ry="4.0" opacity="0.95" fill="#9c9c9c"/><ellipse cx="30.0" cy="46.0" rx="3.3" ry="3.0" opacity="0.75" fill="#9c9c9c"/><ellipse cx="60.6" cy="36.7" rx="2.0" ry="3.3" opacity="0.6" fill="#9c9c9c"/><ellipse cx="59.3" cy="27.3" rx="2.0" ry="2.0" opacity="0.5" fill="#9c9c9c"/><ellipse cx="9.4" cy="39.3" rx="2.7" ry="9.3" opacity="0.35" fill="#9c9c9c"/><ellipse cx="36.0" cy="50.7" rx="3.3" ry="2.7" opacity="0.35" fill="#9c9c9c"/><ellipse cx="52.0" cy="33.3" rx="2.3" ry="2.0" opacity="0.5" fill="#9c9c9c"/><ellipse cx="36.0" cy="57.3" rx="20.0" ry="8.7" opacity="0.6" fill="#e6e6e6" transform="rotate(-10 36.0 57.3)"/><ellipse cx="56.0" cy="49.3" rx="3.3" ry="6.7" opacity="0.5" fill="#e6e6e6" transform="rotate(20 56.0 49.3)"/><ellipse cx="46.7" cy="43.3" rx="2.0" ry="2.0" opacity="0.9" fill="#f2f2f2"/><ellipse cx="39.3" cy="20.0" rx="8.0" ry="2.3" opacity="0.55" fill="#dedede" transform="rotate(25 39.3 20.0)"/><ellipse cx="37.3" cy="29.3" rx="2.0" ry="4.0" opacity="0.6" fill="#dcdcdc" transform="rotate(-30 37.3 29.3)"/></g><circle cx="36" cy="36" r="33.3" fill="#fff" filter="url(#md)" opacity=".22"/><circle cx="36" cy="36" r="33.3" fill="#fff" filter="url(#mn)" opacity=".6"/></g><path d="M36.00 1.40 A34.6 34.6 0 0 1 36.00 70.60 A21.80 34.60 0 0 1 36.00 1.40 Z" fill="#e8aa30" filter="url(#gt)" transform="rotate(-8 36 36)"/></svg><div class="lbl"><span class="w">Ubúdajúci</span><span class="w">polmesiac</span></div></div>
<div class="cell" style="left:334.0px;top:962px"><div class="num">23</div><svg class="moon" viewBox="0 0 72 72"><g clip-path="url(#mc)"><circle cx="36" cy="36" r="33.3" fill="url(#mg)"/><g filter="url(#mb)"><ellipse cx="23.3" cy="20.7" rx="7.3" ry="6.0" opacity="0.9" fill="#9c9c9c" transform="rotate(-20 23.3 20.7)"/><ellipse cx="27.3" cy="32.0" rx="11.0" ry="8.3" opacity="0.9" fill="#9c9c9c" transform="rotate(-25 27.3 32.0)"/><ellipse cx="19.4" cy="26.7" rx="4.0" ry="4.0" opacity="0.7" fill="#9c9c9c"/><ellipse cx="41.3" cy="39.0" rx="6.3" ry="5.7" opacity="0.85" fill="#9c9c9c" transform="rotate(20 41.3 39.0)"/><ellipse cx="44.8" cy="25.5" rx="4.4" ry="4.0" opacity="0.95" fill="#9c9c9c"/><ellipse cx="30.0" cy="46.0" rx="3.3" ry="3.0" opacity="0.75" fill="#9c9c9c"/><ellipse cx="60.6" cy="36.7" rx="2.0" ry="3.3" opacity="0.6" fill="#9c9c9c"/><ellipse cx="59.3" cy="27.3" rx="2.0" ry="2.0" opacity="0.5" fill="#9c9c9c"/><ellipse cx="9.4" cy="39.3" rx="2.7" ry="9.3" opacity="0.35" fill="#9c9c9c"/><ellipse cx="36.0" cy="50.7" rx="3.3" ry="2.7" opacity="0.35" fill="#9c9c9c"/><ellipse cx="52.0" cy="33.3" rx="2.3" ry="2.0" opacity="0.5" fill="#9c9c9c"/><ellipse cx="36.0" cy="57.3" rx="20.0" ry="8.7" opacity="0.6" fill="#e6e6e6" transform="rotate(-10 36.0 57.3)"/><ellipse cx="56.0" cy="49.3" rx="3.3" ry="6.7" opacity="0.5" fill="#e6e6e6" transform="rotate(20 56.0 49.3)"/><ellipse cx="46.7" cy="43.3" rx="2.0" ry="2.0" opacity="0.9" fill="#f2f2f2"/><ellipse cx="39.3" cy="20.0" rx="8.0" ry="2.3" opacity="0.55" fill="#dedede" transform="rotate(25 39.3 20.0)"/><ellipse cx="37.3" cy="29.3" rx="2.0" ry="4.0" opacity="0.6" fill="#dcdcdc" transform="rotate(-30 37.3 29.3)"/></g><circle cx="36" cy="36" r="33.3" fill="#fff" filter="url(#md)" opacity=".22"/><circle cx="36" cy="36" r="33.3" fill="#fff" filter="url(#mn)" opacity=".6"/></g><path d="M36.00 1.40 A34.6 34.6 0 0 1 36.00 70.60 A27.68 34.60 0 0 1 36.00 1.40 Z" fill="#e8aa30" filter="url(#gt)" transform="rotate(-14 36 36)"/></svg><div class="lbl"><span class="w">Ubúdajúci</span><span class="w">polmesiac</span></div></div>
<div class="cell" style="left:551.15px;top:962px"><div class="num">24</div><svg class="moon" viewBox="0 0 72 72"><g clip-path="url(#mc)"><circle cx="36" cy="36" r="33.3" fill="url(#mg)"/><g filter="url(#mb)"><ellipse cx="23.3" cy="20.7" rx="7.3" ry="6.0" opacity="0.9" fill="#9c9c9c" transform="rotate(-20 23.3 20.7)"/><ellipse cx="27.3" cy="32.0" rx="11.0" ry="8.3" opacity="0.9" fill="#9c9c9c" transform="rotate(-25 27.3 32.0)"/><ellipse cx="19.4" cy="26.7" rx="4.0" ry="4.0" opacity="0.7" fill="#9c9c9c"/><ellipse cx="41.3" cy="39.0" rx="6.3" ry="5.7" opacity="0.85" fill="#9c9c9c" transform="rotate(20 41.3 39.0)"/><ellipse cx="44.8" cy="25.5" rx="4.4" ry="4.0" opacity="0.95" fill="#9c9c9c"/><ellipse cx="30.0" cy="46.0" rx="3.3" ry="3.0" opacity="0.75" fill="#9c9c9c"/><ellipse cx="60.6" cy="36.7" rx="2.0" ry="3.3" opacity="0.6" fill="#9c9c9c"/><ellipse cx="59.3" cy="27.3" rx="2.0" ry="2.0" opacity="0.5" fill="#9c9c9c"/><ellipse cx="9.4" cy="39.3" rx="2.7" ry="9.3" opacity="0.35" fill="#9c9c9c"/><ellipse cx="36.0" cy="50.7" rx="3.3" ry="2.7" opacity="0.35" fill="#9c9c9c"/><ellipse cx="52.0" cy="33.3" rx="2.3" ry="2.0" opacity="0.5" fill="#9c9c9c"/><ellipse cx="36.0" cy="57.3" rx="20.0" ry="8.7" opacity="0.6" fill="#e6e6e6" transform="rotate(-10 36.0 57.3)"/><ellipse cx="56.0" cy="49.3" rx="3.3" ry="6.7" opacity="0.5" fill="#e6e6e6" transform="rotate(20 56.0 49.3)"/><ellipse cx="46.7" cy="43.3" rx="2.0" ry="2.0" opacity="0.9" fill="#f2f2f2"/><ellipse cx="39.3" cy="20.0" rx="8.0" ry="2.3" opacity="0.55" fill="#dedede" transform="rotate(25 39.3 20.0)"/><ellipse cx="37.3" cy="29.3" rx="2.0" ry="4.0" opacity="0.6" fill="#dcdcdc" transform="rotate(-30 37.3 29.3)"/></g><circle cx="36" cy="36" r="33.3" fill="#fff" filter="url(#md)" opacity=".22"/><circle cx="36" cy="36" r="33.3" fill="#fff" filter="url(#mn)" opacity=".6"/></g><path d="M36.00 1.40 A34.6 34.6 0 0 1 36.00 70.60 A30.45 34.60 0 0 1 36.00 1.40 Z" fill="#e8aa30" filter="url(#gt)" transform="rotate(-14 36 36)"/></svg><div class="lbl"><span class="w">Ubúdajúci</span><span class="w">polmesiac</span></div></div>
<div class="cell" style="left:768.3px;top:962px"><div class="num">25</div><svg class="moon" viewBox="0 0 72 72"><g clip-path="url(#mc)"><circle cx="36" cy="36" r="33.3" fill="url(#mg)"/><g filter="url(#mb)"><ellipse cx="23.3" cy="20.7" rx="7.3" ry="6.0" opacity="0.9" fill="#9c9c9c" transform="rotate(-20 23.3 20.7)"/><ellipse cx="27.3" cy="32.0" rx="11.0" ry="8.3" opacity="0.9" fill="#9c9c9c" transform="rotate(-25 27.3 32.0)"/><ellipse cx="19.4" cy="26.7" rx="4.0" ry="4.0" opacity="0.7" fill="#9c9c9c"/><ellipse cx="41.3" cy="39.0" rx="6.3" ry="5.7" opacity="0.85" fill="#9c9c9c" transform="rotate(20 41.3 39.0)"/><ellipse cx="44.8" cy="25.5" rx="4.4" ry="4.0" opacity="0.95" fill="#9c9c9c"/><ellipse cx="30.0" cy="46.0" rx="3.3" ry="3.0" opacity="0.75" fill="#9c9c9c"/><ellipse cx="60.6" cy="36.7" rx="2.0" ry="3.3" opacity="0.6" fill="#9c9c9c"/><ellipse cx="59.3" cy="27.3" rx="2.0" ry="2.0" opacity="0.5" fill="#9c9c9c"/><ellipse cx="9.4" cy="39.3" rx="2.7" ry="9.3" opacity="0.35" fill="#9c9c9c"/><ellipse cx="36.0" cy="50.7" rx="3.3" ry="2.7" opacity="0.35" fill="#9c9c9c"/><ellipse cx="52.0" cy="33.3" rx="2.3" ry="2.0" opacity="0.5" fill="#9c9c9c"/><ellipse cx="36.0" cy="57.3" rx="20.0" ry="8.7" opacity="0.6" fill="#e6e6e6" transform="rotate(-10 36.0 57.3)"/><ellipse cx="56.0" cy="49.3" rx="3.3" ry="6.7" opacity="0.5" fill="#e6e6e6" transform="rotate(20 56.0 49.3)"/><ellipse cx="46.7" cy="43.3" rx="2.0" ry="2.0" opacity="0.9" fill="#f2f2f2"/><ellipse cx="39.3" cy="20.0" rx="8.0" ry="2.3" opacity="0.55" fill="#dedede" transform="rotate(25 39.3 20.0)"/><ellipse cx="37.3" cy="29.3" rx="2.0" ry="4.0" opacity="0.6" fill="#dcdcdc" transform="rotate(-30 37.3 29.3)"/></g><circle cx="36" cy="36" r="33.3" fill="#fff" filter="url(#md)" opacity=".22"/><circle cx="36" cy="36" r="33.3" fill="#fff" filter="url(#mn)" opacity=".6"/></g><path d="M36.00 1.40 A34.6 34.6 0 0 1 36.00 70.60 A31.49 34.60 0 0 1 36.00 1.40 Z" fill="#e8aa30" filter="url(#gt)" transform="rotate(-14 36 36)"/></svg><div class="lbl"><span class="w">Ubúdajúci</span><span class="w">polmesiac</span></div></div>
<div class="cell" style="left:985.45px;top:962px"><div class="num">26</div><svg class="moon" viewBox="0 0 72 72"><circle cx="36" cy="36" r="34.6" fill="#e8aa30" filter="url(#gt)"/><g filter="url(#mb)" fill="#d99a22" opacity=".3"><ellipse cx="45" cy="27" rx="5" ry="4"/><ellipse cx="30" cy="33" rx="8" ry="6"/><ellipse cx="40" cy="42" rx="6" ry="5"/></g></svg><div class="lbl"><span>Nový</span><span>mesiac</span></div></div>
<div class="cell" style="left:1202.6px;top:962px"><div class="num">27</div><svg class="moon" viewBox="0 0 72 72"><circle cx="36" cy="36" r="34.6" fill="#e8aa30" filter="url(#gt)"/><g filter="url(#mb)" fill="#d99a22" opacity=".3"><ellipse cx="45" cy="27" rx="5" ry="4"/><ellipse cx="30" cy="33" rx="8" ry="6"/><ellipse cx="40" cy="42" rx="6" ry="5"/></g></svg><div class="lbl"><span>Nový</span><span>mesiac</span></div></div>
<div class="cell" style="left:1419.75px;top:962px"><div class="num">28</div><svg class="moon" viewBox="0 0 72 72"><g clip-path="url(#mc)"><circle cx="36" cy="36" r="33.3" fill="url(#mg)"/><g filter="url(#mb)"><ellipse cx="23.3" cy="20.7" rx="7.3" ry="6.0" opacity="0.9" fill="#9c9c9c" transform="rotate(-20 23.3 20.7)"/><ellipse cx="27.3" cy="32.0" rx="11.0" ry="8.3" opacity="0.9" fill="#9c9c9c" transform="rotate(-25 27.3 32.0)"/><ellipse cx="19.4" cy="26.7" rx="4.0" ry="4.0" opacity="0.7" fill="#9c9c9c"/><ellipse cx="41.3" cy="39.0" rx="6.3" ry="5.7" opacity="0.85" fill="#9c9c9c" transform="rotate(20 41.3 39.0)"/><ellipse cx="44.8" cy="25.5" rx="4.4" ry="4.0" opacity="0.95" fill="#9c9c9c"/><ellipse cx="30.0" cy="46.0" rx="3.3" ry="3.0" opacity="0.75" fill="#9c9c9c"/><ellipse cx="60.6" cy="36.7" rx="2.0" ry="3.3" opacity="0.6" fill="#9c9c9c"/><ellipse cx="59.3" cy="27.3" rx="2.0" ry="2.0" opacity="0.5" fill="#9c9c9c"/><ellipse cx="9.4" cy="39.3" rx="2.7" ry="9.3" opacity="0.35" fill="#9c9c9c"/><ellipse cx="36.0" cy="50.7" rx="3.3" ry="2.7" opacity="0.35" fill="#9c9c9c"/><ellipse cx="52.0" cy="33.3" rx="2.3" ry="2.0" opacity="0.5" fill="#9c9c9c"/><ellipse cx="36.0" cy="57.3" rx="20.0" ry="8.7" opacity="0.6" fill="#e6e6e6" transform="rotate(-10 36.0 57.3)"/><ellipse cx="56.0" cy="49.3" rx="3.3" ry="6.7" opacity="0.5" fill="#e6e6e6" transform="rotate(20 56.0 49.3)"/><ellipse cx="46.7" cy="43.3" rx="2.0" ry="2.0" opacity="0.9" fill="#f2f2f2"/><ellipse cx="39.3" cy="20.0" rx="8.0" ry="2.3" opacity="0.55" fill="#dedede" transform="rotate(25 39.3 20.0)"/><ellipse cx="37.3" cy="29.3" rx="2.0" ry="4.0" opacity="0.6" fill="#dcdcdc" transform="rotate(-30 37.3 29.3)"/></g><circle cx="36" cy="36" r="33.3" fill="#fff" filter="url(#md)" opacity=".22"/><circle cx="36" cy="36" r="33.3" fill="#fff" filter="url(#mn)" opacity=".6"/></g><path d="M36.00 1.40 A34.6 34.6 0 0 0 36.00 70.60 A29.41 34.60 0 0 0 36.00 1.40 Z" fill="#e8aa30" filter="url(#gt)" transform="rotate(-10 36 36)"/></svg><div class="lbl"><span class="w">Ubúdajúci</span><span>mesiac</span></div></div>
<div class="cell" style="left:1636.9px;top:962px"></div>
<div class="abs" style="left:334px;top:1132px;width:1530px;text-align:center;font-size:14.500px;line-height:18px;color:#a9acae;height:15px;overflow:hidden">All rights reserved PreLovca</div>
<div class="abs" style="left:1898px;top:161px;width:22px;height:986px;background:#f1f1f1"></div>
<div class="abs" style="left:1900.200px;top:183.800px;width:17.300px;height:915.700px;background:#c1c1c1"></div>
<svg class="abs" style="left:1903px;top:170px" width="11" height="7" viewBox="0 0 11 7"><path d="M0.500 6 L5.500 1 L10.500 6 Z" fill="#a3a3a3"/></svg>
<svg class="abs" style="left:1903px;top:1131px" width="11" height="7" viewBox="0 0 11 7"><path d="M0.500 1 L5.500 6 L10.500 1 Z" fill="#505050"/></svg>
<!-- ================= TASKBAR ================= -->
<div id="taskbar">
<div class="abs" style="left:656px;top:0;width:64px;height:53px;background:#40563f"></div>
<div class="und" style="left:73px;width:54px"></div>
<div class="und" style="left:334px;width:54px"></div>
<div class="und" style="left:531px;width:53px"></div>
<div class="und" style="left:656px;width:64px"></div>
<div class="und" style="left:922px;width:54px"></div>
<!-- windows -->
<svg class="abs" style="left:20px;top:16px" width="23" height="22" viewBox="0 0 23 22"><path d="M0 3.200 L9.500 1.800 L9.500 10.400 L0 10.400 Z M11 1.600 L23 0 L23 10.400 L11 10.400 Z M0 11.800 L9.500 11.800 L9.500 20.300 L0 18.900 Z M11 11.800 L23 11.800 L23 22 L11 20.500 Z" fill="#fff"/></svg>
<!-- facebook -->
<svg class="abs" style="left:84px;top:10px" width="33" height="33" viewBox="0 0 33 33"><circle cx="16.500" cy="16.500" r="16" fill="#0866ff"/><path d="M18.500 33 L18.500 20.500 L22.500 20.500 L23.200 16 L18.500 16 L18.500 13.500 Q18.500 11 21 11 L23.300 11 L23.300 7.200 Q21.500 6.800 19.800 6.800 Q13.800 6.800 13.800 13 L13.800 16 L9.800 16 L9.800 20.500 L13.800 20.500 L13.800 33 Z" fill="#fff"/></svg>
<!-- todo check -->
<svg class="abs" style="left:148px;top:12px" width="34" height="28" viewBox="0 0 34 28"><path d="M1 13.500 L6 8.500 L14.500 17 L9.500 22 Z" fill="#2564cf"/><path d="M9.500 22 L28 3.500 L33 8.500 L14.500 27 Z" fill="#3e9bf0"/></svg>
<!-- whatsapp -->
<svg class="abs" style="left:213px;top:9px" width="34" height="35" viewBox="0 0 34 35"><path d="M17 3 A14 14 0 1 1 9.500 28.800 L3 31 L5.200 24.500 A14 14 0 0 1 17 3 Z" fill="none" stroke="#25d366" stroke-width="3"/><path d="M12 10.500 Q9.500 12 11 16 Q14 22 20 24 Q23.500 24.800 24.500 22 L21 19.800 L19.300 21.300 Q15.800 19.500 14.300 16 L15.800 14.500 Z" fill="#25d366"/></svg>
<!-- calculator -->
<svg class="abs" style="left:284px;top:10px" width="25" height="32" viewBox="0 0 25 32"><rect x="0.500" y="0.500" width="24" height="31" rx="2" fill="#8b949e" stroke="#5d656e"/><rect x="3" y="3" width="19" height="6" fill="#53c6ef"/><g fill="#e9edf1"><rect x="3" y="11.500" width="4" height="4"/><rect x="8.500" y="11.500" width="4" height="4"/><rect x="14" y="11.500" width="4" height="4"/><rect x="3" y="17.500" width="4" height="4"/><rect x="8.500" y="17.500" width="4" height="4"/><rect x="3" y="23.500" width="4" height="4"/><rect x="8.500" y="23.500" width="4" height="4"/></g><rect x="14" y="17.500" width="4" height="4" fill="#e9edf1"/><rect x="18.500" y="17.500" width="4" height="10" fill="#1f5fae"/><rect x="14" y="23.500" width="4" height="4" fill="#e9edf1"/></svg>
<!-- explorer -->
<svg class="abs" style="left:346px;top:12px" width="31" height="27" viewBox="0 0 31 27"><path d="M1 2 L11 2 L13 4.500 L30 4.500 L30 24 L1 24 Z" fill="#e9a41d"/><rect x="1" y="6" width="29" height="18" fill="#ffd75e"/><path d="M8 27 L8 17 L23 17 L23 27 L19 27 L19 21 L12 21 L12 27 Z" fill="#3f8fe0"/><rect x="8" y="15" width="15" height="3" fill="#5aa9ee"/></svg>
<!-- double commander -->
<svg class="abs" style="left:411px;top:11px" width="32" height="30" viewBox="0 0 32 30"><rect x="0.500" y="0.500" width="31" height="29" rx="4" fill="#d9392b"/><rect x="0.500" y="0.500" width="31" height="14" rx="4" fill="#e65a4a"/><path d="M2 6 Q13 6 13 15 Q13 24 2 24 L2 20 Q8 20 8 15 Q8 10 2 10 Z" fill="#fff"/><path d="M30 6 Q18 6 18 15 Q18 24 30 24 L30 20 Q23 20 23 15 Q23 10 30 10 Z" fill="#fff"/></svg>
<!-- notepad -->
<svg class="abs" style="left:474px;top:9px" width="34" height="34" viewBox="0 0 34 34"><defs><linearGradient id="npg" x1="0" y1="0" x2="1" y2="1"><stop offset="0" stop-color="#bfe6ee"/><stop offset=".6" stop-color="#eef6f8"/><stop offset="1" stop-color="#dfe8ec"/></linearGradient></defs><path d="M12 3 L31 7 L25 31 L4 26 Z" fill="url(#npg)"/><path d="M12 3 L31 7 L30 11 L10.500 7 Z" fill="#7fc6d6"/><path d="M12 3 L4 26 L7 26.700 L14 5 Z" fill="#4aa3bd"/><path d="M25 31 L31 7 L32.500 9.500 L27 31.500 Z" fill="#b58a5e"/><path d="M4 26 L25 31 L27 31.500 L6 27.500 Z" fill="#9aa7ae"/><path d="M13 11 L27 14 M12 15 L26 18 M11 19 L24 22" stroke="#c4d3d9" stroke-width=".800"/></svg>
<!-- keep -->
<svg class="abs" style="left:547px;top:11px" width="22" height="30" viewBox="0 0 22 30"><path d="M2 0 L15 0 L22 7 L22 28 Q22 30 20 30 L2 30 Q0 30 0 28 L0 2 Q0 0 2 0 Z" fill="#fbbc04"/><path d="M15 0 L22 7 L15 7 Z" fill="#e69a00"/><circle cx="11" cy="16" r="4" fill="#fff"/><rect x="8.800" y="20.500" width="4.400" height="2.500" fill="#fff"/></svg>
<!-- edge -->
<svg class="abs" style="left:606px;top:10px" width="33" height="33" viewBox="0 0 33 33"><defs><linearGradient id="eg1" x1="0" y1="1" x2="1" y2="0"><stop offset="0" stop-color="#0c59a4"/><stop offset=".6" stop-color="#1b9de2"/><stop offset="1" stop-color="#35c1f1"/></linearGradient><linearGradient id="eg2" x1="0" y1="0" x2="1" y2="1"><stop offset="0" stop-color="#2fc2df"/><stop offset="1" stop-color="#5be06f"/></linearGradient></defs><circle cx="16.500" cy="16.500" r="16" fill="url(#eg1)"/><path d="M32.300 14 Q33 19 30 24 Q26 28 20 26 Q14 24 14 18 Q14 14 18 11 Q24 9 32.300 14 Z" fill="url(#eg2)"/><path d="M4 24 Q1 15 8 10.500 Q14 7.500 19.500 10.500 Q14 12.500 14 18.500 Q14.500 25 22 26.500 Q27 27 30.500 23.500 Q26 32.500 16 32.500 Q8 31.500 4 24 Z" fill="#0c4f96"/></svg>
<!-- chrome -->
<svg class="abs" style="left:671px;top:10px" width="33" height="33" viewBox="0 0 33 33"><circle cx="16.500" cy="16.500" r="16" fill="#fff"/><path d="M16.500 0.500 A16 16 0 0 1 30.360 8.500 L16.500 8.500 A8 8 0 0 0 9.570 12.500 L2.640 8.500 A16 16 0 0 1 16.500 0.500 Z" fill="#ea4335"/><path d="M30.360 8.500 A16 16 0 0 1 16.500 32.500 L23.430 20.500 A8 8 0 0 0 23.430 12.500 L16.500 8.500 Z" fill="#fbbc04"/><path d="M16.500 32.500 A16 16 0 0 1 2.640 8.500 L9.570 20.500 A8 8 0 0 0 16.500 24.500 L23.430 20.500 Z" fill="#34a853"/><circle cx="16.500" cy="16.500" r="7.300" fill="#fff"/><circle cx="16.500" cy="16.500" r="5.900" fill="#4285f4"/></svg>
<!-- visual studio -->
<svg class="abs" style="left:737px;top:10px" width="33" height="33" viewBox="0 0 33 33"><path d="M23.500 1 L32 5 L32 28 L23.500 32 L9 19.500 L3.500 24 L1 22.500 L1 10.500 L3.500 9 L9 13.500 Z" fill="#8a5bd6"/><path d="M23.500 1 L32 5 L32 28 L23.500 32 Z" fill="#b48cf2"/><path d="M23.500 10 L14.500 16.500 L23.500 23 Z" fill="#1b301d"/><path d="M4 13 L8 16.500 L4 20 Z" fill="#1b301d"/></svg>
<!-- blue check box -->
<svg class="abs" style="left:803px;top:11px" width="32" height="31" viewBox="0 0 32 31"><rect width="32" height="31" fill="#4b4f55"/><rect x="4.500" y="4.500" width="23" height="22" fill="#1a7fe0"/><path d="M10 16 L14.500 20.500 L22.500 10.500" fill="none" stroke="#fff" stroke-width="2.400"/></svg>
<!-- pink scales -->
<svg class="abs" style="left:868px;top:11px" width="32" height="31" viewBox="0 0 32 31"><defs><linearGradient id="pg" x1="0" y1="0" x2="1" y2="0"><stop offset="0" stop-color="#ff1a6a"/><stop offset=".5" stop-color="#ff2aa0"/><stop offset="1" stop-color="#b32af0"/></linearGradient></defs><rect width="32" height="31" rx="7" fill="url(#pg)"/><path d="M16 3 L16 28 M5 8 L27 8 M6.500 8 L3 18 L10 18 Z M25.500 8 L22 18 L29 18 Z M11 28 L21 28" stroke="#1a1030" stroke-width="1.800" fill="none"/><path d="M3 18 Q6.500 23 10 18 Z" fill="#f7c41a"/><path d="M22 18 Q25.500 23 29 18 Z" fill="#f7c41a"/></svg>
<!-- flower -->
<svg class="abs" style="left:932px;top:9px" width="34" height="35" viewBox="0 0 34 35"><g opacity=".95"><ellipse cx="17" cy="8.500" rx="6" ry="7.500" fill="#f4c21c"/><ellipse cx="17" cy="8.500" rx="6" ry="7.500" fill="#ef6a2b" transform="rotate(60 17 17.500)"/><ellipse cx="17" cy="8.500" rx="6" ry="7.500" fill="#c43bd2" transform="rotate(120 17 17.500)"/><ellipse cx="17" cy="8.500" rx="6" ry="7.500" fill="#2a7de8" transform="rotate(180 17 17.500)"/><ellipse cx="17" cy="8.500" rx="6" ry="7.500" fill="#2bb673" transform="rotate(240 17 17.500)"/><ellipse cx="17" cy="8.500" rx="6" ry="7.500" fill="#9bd22f" transform="rotate(300 17 17.500)"/></g><circle cx="17" cy="17.500" r="7.500" fill="#1b301d"/><circle cx="17" cy="17.500" r="6.300" fill="#b8c6cc"/><circle cx="15.500" cy="16" r="3" fill="#f2f6f8" opacity=".85"/></svg>
<!-- tray -->
<svg class="abs" style="left:1524px;top:21px" width="17" height="11" viewBox="0 0 17 11"><path d="M1.500 9.500 L8.500 2 L15.500 9.500" fill="none" stroke="#fff" stroke-width="1.600"/></svg>
<svg class="abs" style="left:1553px;top:14px" width="23" height="26" viewBox="0 0 23 26"><path d="M10 1 Q5.500 3.500 1 3.500 L1 11 Q1 19 10 23 Q19 19 19 11 L19 3.500 Q14.500 3.500 10 1 Z" fill="#fff" stroke="#1b301d" stroke-width=".6"/><path d="M10 1 L10 23 M1 11.500 L19 11.500" stroke="#1b301d" stroke-width="1.600"/><circle cx="17" cy="20" r="5.500" fill="#21a366"/><path d="M14.300 20 L16.300 22 L19.800 18" fill="none" stroke="#fff" stroke-width="1.500"/></svg>
<svg class="abs" style="left:1587px;top:15px" width="20" height="23" viewBox="0 0 20 23"><path d="M1 2 L14 2 L13.500 21 Q13.500 22.500 12 22.500 L3 22.500 Q1.500 22.500 1.500 21 Z" fill="#1bb5a0"/><path d="M14 6 Q19 6 18.500 11 Q18 15 13.800 15" fill="none" stroke="#1bb5a0" stroke-width="2.200"/><rect x="4" y="6" width="2.500" height="6" rx="1.200" fill="#7be0d0"/></svg>
<svg class="abs" style="left:1616px;top:16px" width="24" height="21" viewBox="0 0 24 21"><rect x="7.500" y="6.500" width="14" height="11" fill="none" stroke="#fff" stroke-width="1.500"/><rect x="21.500" y="9.500" width="2" height="5" fill="#fff"/><rect x="10" y="11" width="9" height="4.500" fill="#fff"/><path d="M2 1 L2 5 M6 1 L6 5 M1 5 L7 5 L7 8 Q7 10 4 10 Q1 10 1 8 Z M4 10 L4 14 L7.500 14" fill="none" stroke="#fff" stroke-width="1.400"/></svg>
<svg class="abs" style="left:1648px;top:15px" width="25" height="23" viewBox="0 0 25 23"><rect x="6.500" y="2" width="17" height="13" fill="none" stroke="#fff" stroke-width="1.500"/><path d="M15 15 L15 20 M10 20.500 L20 20.500" stroke="#fff" stroke-width="1.500"/><rect x="1" y="1" width="6" height="5" fill="#1b301d" stroke="#fff" stroke-width="1.300"/><path d="M4 6 L4 21 L9 21" fill="none" stroke="#fff" stroke-width="1.300"/></svg>
<svg class="abs" style="left:1680px;top:16px" width="24" height="21" viewBox="0 0 24 21"><path d="M1.500 7 L5 7 L10 2.500 L10 18.500 L5 14 L1.500 14 Z" fill="none" stroke="#fff" stroke-width="1.400" stroke-linejoin="round"/><path d="M12.500 7.500 Q14.500 10.500 12.500 13.500 M15 5 Q18.500 10.500 15 16" fill="none" stroke="#fff" stroke-width="1.400"/><path d="M18 2.500 Q23 10.500 18 18.500" fill="none" stroke="#7d8a7d" stroke-width="1.400"/></svg>
<div class="tray" id="ces" style="left:1702.500px;top:16px;width:60px;text-align:center;font-size:16px;line-height:22px;transform:scaleX(.810)">CES</div>
<div class="tray" id="clock1" style="left:1755px;top:2.500px;width:96px;text-align:center;font-size:15.800px;line-height:23px;transform:scaleX(.880)">19:54</div><div class="tray" id="clock2" style="left:1755px;top:26.500px;width:96px;text-align:center;font-size:15.800px;line-height:23px;transform:scaleX(.970)">03/01/2025</div>
<svg class="abs" style="left:1865px;top:15px" width="23" height="24" viewBox="0 0 23 24"><path d="M1 1 L22 1 L22 17.500 L14.500 17.500 L11.500 21.500 L8.500 17.500 L1 17.500 Z" fill="none" stroke="#fff" stroke-width="1.500" stroke-linejoin="miter"/></svg>
<div class="abs" style="left:1913px;top:0;width:1px;height:53px;background:#7c8a7d"></div>
</div>
</body>
</html>
